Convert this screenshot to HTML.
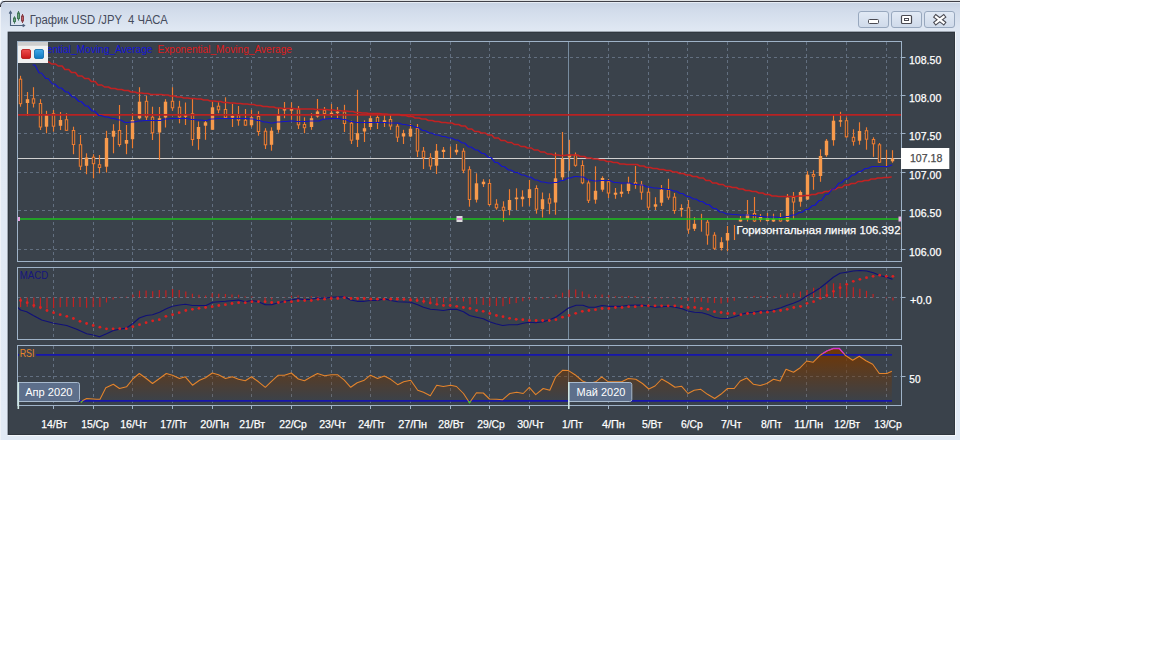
<!DOCTYPE html>
<html lang="ru"><head><meta charset="utf-8"><title>График USD/JPY 4 ЧАСА</title>
<style>html,body{margin:0;padding:0;background:#fff}body{width:1152px;height:648px;overflow:hidden;font-family:"Liberation Sans", sans-serif}svg{display:block}text{font-family:"Liberation Sans", sans-serif}</style></head><body>
<svg width="1152" height="648" viewBox="0 0 1152 648">
<defs>
<linearGradient id="wg" x1="0" y1="0" x2="0" y2="1"><stop offset="0" stop-color="#c4d0e1"/><stop offset="0.025" stop-color="#d2dceb"/><stop offset="0.07" stop-color="#e0e8f3"/><stop offset="1" stop-color="#e2eaf5"/></linearGradient>
<linearGradient id="rsig" gradientUnits="userSpaceOnUse" x1="0" y1="346" x2="0" y2="402"><stop offset="0" stop-color="#743600" stop-opacity="1"/><stop offset="1" stop-color="#743600" stop-opacity="0"/></linearGradient>
<linearGradient id="btn" x1="0" y1="0" x2="0" y2="1"><stop offset="0" stop-color="#e2eaf5"/><stop offset="1" stop-color="#cfdaea"/></linearGradient>
<linearGradient id="redsq" x1="0" y1="0" x2="0" y2="1"><stop offset="0" stop-color="#f05050"/><stop offset="1" stop-color="#c81818"/></linearGradient>
<linearGradient id="bluesq" x1="0" y1="0" x2="0" y2="1"><stop offset="0" stop-color="#40a8e8"/><stop offset="1" stop-color="#1078c0"/></linearGradient>
<clipPath id="cm"><rect x="18" y="42" width="883" height="219"/></clipPath>
<clipPath id="chi"><rect x="0" y="340" width="960" height="13.8"/></clipPath>
<clipPath id="clo"><rect x="0" y="401.2" width="960" height="10"/></clipPath>
</defs>
<rect x="0" y="0" width="1152" height="648" fill="#ffffff"/>
<path d="M0,440 L0,5 Q0,0 5,0 L960,0 L960,440 Z" fill="url(#wg)"/>
<rect x="3" y="0" width="957" height="0.8" fill="#ffffff"/><path d="M0.4,7 Q0.4,1.4 5,1.4 L960,1.4" fill="none" stroke="#303036" stroke-width="1"/><line x1="5" y1="2.5" x2="960" y2="2.5" stroke="#eef3f9" stroke-width="0.8"/>
<line x1="0.5" y1="7" x2="0.5" y2="440" stroke="#eef2f8" stroke-width="1"/>
<g fill="none" stroke="#4e627e" stroke-width="1.1"><path d="M10.5,12 V25.5 H24"/><path d="M9.2,13.6 L10.5,11.4 L11.8,13.6"/><path d="M22.7,24.2 L24.6,25.5 L22.7,26.8"/></g>
<g stroke="#44785a" stroke-width="1" fill="#6aa47a"><line x1="14.5" y1="16.3" x2="14.5" y2="23.7"/><rect x="13.5" y="18" width="2" height="3.6"/><line x1="18.5" y1="11" x2="18.5" y2="20.6"/><rect x="17.5" y="13" width="2" height="5.6"/></g>
<g stroke="#8a4048" stroke-width="1" fill="#c06068"><line x1="22.5" y1="14" x2="22.5" y2="23"/><rect x="21.5" y="16" width="2" height="5"/></g>
<text x="29.7" y="24" font-size="12" fill="#454b5c" textLength="138" lengthAdjust="spacingAndGlyphs" xml:space="preserve">График USD /JPY  4 ЧАСА</text>
<rect x="858.5" y="11.5" width="30" height="16" rx="2.5" fill="url(#btn)" stroke="#98a8be" stroke-width="1"/>
<rect x="891.5" y="11.5" width="30" height="16" rx="2.5" fill="url(#btn)" stroke="#98a8be" stroke-width="1"/>
<rect x="924.5" y="11.5" width="30" height="16" rx="2.5" fill="url(#btn)" stroke="#98a8be" stroke-width="1"/>
<rect x="868.5" y="19.5" width="10" height="4" rx="1" fill="#fff" stroke="#4a4a52" stroke-width="1"/>
<rect x="901.5" y="15.5" width="10" height="8" rx="1" fill="#fff" stroke="#4a4a52" stroke-width="1.2"/><rect x="904.5" y="18.5" width="4" height="2" fill="#fff" stroke="#4a4a52" stroke-width="1"/>
<path d="M936,16.8 L943.5,22.6 M943.5,16.8 L936,22.6" stroke="#4a4a52" stroke-width="4.4" stroke-linecap="square"/><path d="M936,16.8 L943.5,22.6 M943.5,16.8 L936,22.6" stroke="#fff" stroke-width="2.3" stroke-linecap="square"/>
<rect x="7.6" y="31.6" width="947.4" height="403.4" fill="#3a424b"/>
<rect x="8.5" y="32.5" width="946" height="402" fill="none" stroke="#30373f" stroke-width="1"/>
<path d="M955.5,32 V435.5 H8" fill="none" stroke="#f4f7fb" stroke-width="1"/>
<line x1="53.5" y1="42.0" x2="53.5" y2="261.0" stroke="#626f80" stroke-width="1" stroke-dasharray="3 3"/>
<line x1="93.5" y1="42.0" x2="93.5" y2="261.0" stroke="#626f80" stroke-width="1" stroke-dasharray="3 3"/>
<line x1="132.5" y1="42.0" x2="132.5" y2="261.0" stroke="#626f80" stroke-width="1" stroke-dasharray="3 3"/>
<line x1="172.5" y1="42.0" x2="172.5" y2="261.0" stroke="#626f80" stroke-width="1" stroke-dasharray="3 3"/>
<line x1="212.5" y1="42.0" x2="212.5" y2="261.0" stroke="#626f80" stroke-width="1" stroke-dasharray="3 3"/>
<line x1="251.5" y1="42.0" x2="251.5" y2="261.0" stroke="#626f80" stroke-width="1" stroke-dasharray="3 3"/>
<line x1="291.5" y1="42.0" x2="291.5" y2="261.0" stroke="#626f80" stroke-width="1" stroke-dasharray="3 3"/>
<line x1="331.5" y1="42.0" x2="331.5" y2="261.0" stroke="#626f80" stroke-width="1" stroke-dasharray="3 3"/>
<line x1="370.5" y1="42.0" x2="370.5" y2="261.0" stroke="#626f80" stroke-width="1" stroke-dasharray="3 3"/>
<line x1="410.5" y1="42.0" x2="410.5" y2="261.0" stroke="#626f80" stroke-width="1" stroke-dasharray="3 3"/>
<line x1="450.5" y1="42.0" x2="450.5" y2="261.0" stroke="#626f80" stroke-width="1" stroke-dasharray="3 3"/>
<line x1="489.5" y1="42.0" x2="489.5" y2="261.0" stroke="#626f80" stroke-width="1" stroke-dasharray="3 3"/>
<line x1="529.5" y1="42.0" x2="529.5" y2="261.0" stroke="#626f80" stroke-width="1" stroke-dasharray="3 3"/>
<line x1="568.5" y1="42.0" x2="568.5" y2="261.0" stroke="#788c9f" stroke-width="1"/>
<line x1="608.5" y1="42.0" x2="608.5" y2="261.0" stroke="#626f80" stroke-width="1" stroke-dasharray="3 3"/>
<line x1="648.5" y1="42.0" x2="648.5" y2="261.0" stroke="#626f80" stroke-width="1" stroke-dasharray="3 3"/>
<line x1="687.5" y1="42.0" x2="687.5" y2="261.0" stroke="#626f80" stroke-width="1" stroke-dasharray="3 3"/>
<line x1="727.5" y1="42.0" x2="727.5" y2="261.0" stroke="#626f80" stroke-width="1" stroke-dasharray="3 3"/>
<line x1="767.5" y1="42.0" x2="767.5" y2="261.0" stroke="#626f80" stroke-width="1" stroke-dasharray="3 3"/>
<line x1="806.5" y1="42.0" x2="806.5" y2="261.0" stroke="#626f80" stroke-width="1" stroke-dasharray="3 3"/>
<line x1="846.5" y1="42.0" x2="846.5" y2="261.0" stroke="#626f80" stroke-width="1" stroke-dasharray="3 3"/>
<line x1="886.5" y1="42.0" x2="886.5" y2="261.0" stroke="#626f80" stroke-width="1" stroke-dasharray="3 3"/>
<line x1="18" y1="57.5" x2="901" y2="57.5" stroke="#626f80" stroke-width="1" stroke-dasharray="3 3"/>
<line x1="18" y1="95.5" x2="901" y2="95.5" stroke="#626f80" stroke-width="1" stroke-dasharray="3 3"/>
<line x1="18" y1="133.5" x2="901" y2="133.5" stroke="#626f80" stroke-width="1" stroke-dasharray="3 3"/>
<line x1="18" y1="172.5" x2="901" y2="172.5" stroke="#626f80" stroke-width="1" stroke-dasharray="3 3"/>
<line x1="18" y1="210.5" x2="901" y2="210.5" stroke="#626f80" stroke-width="1" stroke-dasharray="3 3"/>
<line x1="18" y1="249.5" x2="901" y2="249.5" stroke="#626f80" stroke-width="1" stroke-dasharray="3 3"/>
<line x1="53.5" y1="268.0" x2="53.5" y2="339.0" stroke="#626f80" stroke-width="1" stroke-dasharray="3 3"/>
<line x1="93.5" y1="268.0" x2="93.5" y2="339.0" stroke="#626f80" stroke-width="1" stroke-dasharray="3 3"/>
<line x1="132.5" y1="268.0" x2="132.5" y2="339.0" stroke="#626f80" stroke-width="1" stroke-dasharray="3 3"/>
<line x1="172.5" y1="268.0" x2="172.5" y2="339.0" stroke="#626f80" stroke-width="1" stroke-dasharray="3 3"/>
<line x1="212.5" y1="268.0" x2="212.5" y2="339.0" stroke="#626f80" stroke-width="1" stroke-dasharray="3 3"/>
<line x1="251.5" y1="268.0" x2="251.5" y2="339.0" stroke="#626f80" stroke-width="1" stroke-dasharray="3 3"/>
<line x1="291.5" y1="268.0" x2="291.5" y2="339.0" stroke="#626f80" stroke-width="1" stroke-dasharray="3 3"/>
<line x1="331.5" y1="268.0" x2="331.5" y2="339.0" stroke="#626f80" stroke-width="1" stroke-dasharray="3 3"/>
<line x1="370.5" y1="268.0" x2="370.5" y2="339.0" stroke="#626f80" stroke-width="1" stroke-dasharray="3 3"/>
<line x1="410.5" y1="268.0" x2="410.5" y2="339.0" stroke="#626f80" stroke-width="1" stroke-dasharray="3 3"/>
<line x1="450.5" y1="268.0" x2="450.5" y2="339.0" stroke="#626f80" stroke-width="1" stroke-dasharray="3 3"/>
<line x1="489.5" y1="268.0" x2="489.5" y2="339.0" stroke="#626f80" stroke-width="1" stroke-dasharray="3 3"/>
<line x1="529.5" y1="268.0" x2="529.5" y2="339.0" stroke="#626f80" stroke-width="1" stroke-dasharray="3 3"/>
<line x1="568.5" y1="268.0" x2="568.5" y2="339.0" stroke="#788c9f" stroke-width="1"/>
<line x1="608.5" y1="268.0" x2="608.5" y2="339.0" stroke="#626f80" stroke-width="1" stroke-dasharray="3 3"/>
<line x1="648.5" y1="268.0" x2="648.5" y2="339.0" stroke="#626f80" stroke-width="1" stroke-dasharray="3 3"/>
<line x1="687.5" y1="268.0" x2="687.5" y2="339.0" stroke="#626f80" stroke-width="1" stroke-dasharray="3 3"/>
<line x1="727.5" y1="268.0" x2="727.5" y2="339.0" stroke="#626f80" stroke-width="1" stroke-dasharray="3 3"/>
<line x1="767.5" y1="268.0" x2="767.5" y2="339.0" stroke="#626f80" stroke-width="1" stroke-dasharray="3 3"/>
<line x1="806.5" y1="268.0" x2="806.5" y2="339.0" stroke="#626f80" stroke-width="1" stroke-dasharray="3 3"/>
<line x1="846.5" y1="268.0" x2="846.5" y2="339.0" stroke="#626f80" stroke-width="1" stroke-dasharray="3 3"/>
<line x1="886.5" y1="268.0" x2="886.5" y2="339.0" stroke="#626f80" stroke-width="1" stroke-dasharray="3 3"/>
<line x1="18" y1="297.5" x2="901" y2="297.5" stroke="#626f80" stroke-width="1" stroke-dasharray="3 3"/>
<line x1="53.5" y1="346.0" x2="53.5" y2="405.0" stroke="#626f80" stroke-width="1" stroke-dasharray="3 3"/>
<line x1="93.5" y1="346.0" x2="93.5" y2="405.0" stroke="#626f80" stroke-width="1" stroke-dasharray="3 3"/>
<line x1="132.5" y1="346.0" x2="132.5" y2="405.0" stroke="#626f80" stroke-width="1" stroke-dasharray="3 3"/>
<line x1="172.5" y1="346.0" x2="172.5" y2="405.0" stroke="#626f80" stroke-width="1" stroke-dasharray="3 3"/>
<line x1="212.5" y1="346.0" x2="212.5" y2="405.0" stroke="#626f80" stroke-width="1" stroke-dasharray="3 3"/>
<line x1="251.5" y1="346.0" x2="251.5" y2="405.0" stroke="#626f80" stroke-width="1" stroke-dasharray="3 3"/>
<line x1="291.5" y1="346.0" x2="291.5" y2="405.0" stroke="#626f80" stroke-width="1" stroke-dasharray="3 3"/>
<line x1="331.5" y1="346.0" x2="331.5" y2="405.0" stroke="#626f80" stroke-width="1" stroke-dasharray="3 3"/>
<line x1="370.5" y1="346.0" x2="370.5" y2="405.0" stroke="#626f80" stroke-width="1" stroke-dasharray="3 3"/>
<line x1="410.5" y1="346.0" x2="410.5" y2="405.0" stroke="#626f80" stroke-width="1" stroke-dasharray="3 3"/>
<line x1="450.5" y1="346.0" x2="450.5" y2="405.0" stroke="#626f80" stroke-width="1" stroke-dasharray="3 3"/>
<line x1="489.5" y1="346.0" x2="489.5" y2="405.0" stroke="#626f80" stroke-width="1" stroke-dasharray="3 3"/>
<line x1="529.5" y1="346.0" x2="529.5" y2="405.0" stroke="#626f80" stroke-width="1" stroke-dasharray="3 3"/>
<line x1="568.5" y1="346.0" x2="568.5" y2="405.0" stroke="#788c9f" stroke-width="1"/>
<line x1="608.5" y1="346.0" x2="608.5" y2="405.0" stroke="#626f80" stroke-width="1" stroke-dasharray="3 3"/>
<line x1="648.5" y1="346.0" x2="648.5" y2="405.0" stroke="#626f80" stroke-width="1" stroke-dasharray="3 3"/>
<line x1="687.5" y1="346.0" x2="687.5" y2="405.0" stroke="#626f80" stroke-width="1" stroke-dasharray="3 3"/>
<line x1="727.5" y1="346.0" x2="727.5" y2="405.0" stroke="#626f80" stroke-width="1" stroke-dasharray="3 3"/>
<line x1="767.5" y1="346.0" x2="767.5" y2="405.0" stroke="#626f80" stroke-width="1" stroke-dasharray="3 3"/>
<line x1="806.5" y1="346.0" x2="806.5" y2="405.0" stroke="#626f80" stroke-width="1" stroke-dasharray="3 3"/>
<line x1="846.5" y1="346.0" x2="846.5" y2="405.0" stroke="#626f80" stroke-width="1" stroke-dasharray="3 3"/>
<line x1="886.5" y1="346.0" x2="886.5" y2="405.0" stroke="#626f80" stroke-width="1" stroke-dasharray="3 3"/>
<line x1="18" y1="376.5" x2="901" y2="376.5" stroke="#626f80" stroke-width="1" stroke-dasharray="3 3"/>
<g clip-path="url(#cm)">
<line x1="18" y1="158.5" x2="901" y2="158.5" stroke="#d0d0d0" stroke-width="1.1"/>
<line x1="20.5" y1="75.8" x2="20.5" y2="106.7" stroke="#ee7c30" stroke-width="1.15"/>
<rect x="19.3" y="79.2" width="2.4" height="24.5" fill="#3f3e40" stroke="#ee7c30" stroke-width="1"/>
<line x1="27.5" y1="92.0" x2="27.5" y2="115.8" stroke="#ee7c30" stroke-width="1.15"/>
<rect x="25.8" y="99.2" width="3.4" height="3.8" fill="#f79a4c"/>
<line x1="33.5" y1="87.2" x2="33.5" y2="107.5" stroke="#ee7c30" stroke-width="1.15"/>
<rect x="32.3" y="98.8" width="2.4" height="4.4" fill="#3f3e40" stroke="#ee7c30" stroke-width="1"/>
<line x1="40.5" y1="99.2" x2="40.5" y2="130.0" stroke="#ee7c30" stroke-width="1.15"/>
<rect x="39.3" y="103.5" width="2.4" height="23.5" fill="#3f3e40" stroke="#ee7c30" stroke-width="1"/>
<line x1="46.5" y1="110.8" x2="46.5" y2="133.3" stroke="#ee7c30" stroke-width="1.15"/>
<rect x="44.8" y="115.0" width="3.4" height="11.7" fill="#f79a4c"/>
<line x1="53.5" y1="110.0" x2="53.5" y2="131.7" stroke="#ee7c30" stroke-width="1.15"/>
<rect x="52.3" y="113.8" width="2.4" height="12.4" fill="#3f3e40" stroke="#ee7c30" stroke-width="1"/>
<line x1="60.5" y1="112.0" x2="60.5" y2="130.0" stroke="#ee7c30" stroke-width="1.15"/>
<rect x="58.8" y="120.0" width="3.4" height="5.8" fill="#f79a4c"/>
<line x1="66.5" y1="113.3" x2="66.5" y2="130.8" stroke="#ee7c30" stroke-width="1.15"/>
<rect x="65.3" y="119.7" width="2.4" height="10.6" fill="#3f3e40" stroke="#ee7c30" stroke-width="1"/>
<line x1="73.5" y1="126.7" x2="73.5" y2="154.2" stroke="#ee7c30" stroke-width="1.15"/>
<rect x="72.3" y="130.5" width="2.4" height="14.0" fill="#3f3e40" stroke="#ee7c30" stroke-width="1"/>
<line x1="80.5" y1="135.0" x2="80.5" y2="170.0" stroke="#ee7c30" stroke-width="1.15"/>
<rect x="79.3" y="144.7" width="2.4" height="21.5" fill="#3f3e40" stroke="#ee7c30" stroke-width="1"/>
<line x1="86.5" y1="153.3" x2="86.5" y2="174.2" stroke="#ee7c30" stroke-width="1.15"/>
<rect x="84.8" y="157.5" width="3.4" height="8.3" fill="#f79a4c"/>
<line x1="93.5" y1="154.2" x2="93.5" y2="178.3" stroke="#ee7c30" stroke-width="1.15"/>
<rect x="92.3" y="157.2" width="2.4" height="6.5" fill="#3f3e40" stroke="#ee7c30" stroke-width="1"/>
<line x1="99.5" y1="155.0" x2="99.5" y2="173.3" stroke="#ee7c30" stroke-width="1.15"/>
<rect x="98.3" y="164.7" width="2.4" height="2.8" fill="#3f3e40" stroke="#ee7c30" stroke-width="1"/>
<line x1="106.5" y1="130.8" x2="106.5" y2="172.5" stroke="#ee7c30" stroke-width="1.15"/>
<rect x="104.8" y="138.0" width="3.4" height="28.7" fill="#f79a4c"/>
<line x1="113.5" y1="124.2" x2="113.5" y2="153.3" stroke="#ee7c30" stroke-width="1.15"/>
<rect x="111.8" y="130.8" width="3.4" height="5.9" fill="#f79a4c"/>
<line x1="119.5" y1="105.0" x2="119.5" y2="146.7" stroke="#ee7c30" stroke-width="1.15"/>
<rect x="118.3" y="130.5" width="2.4" height="14.0" fill="#3f3e40" stroke="#ee7c30" stroke-width="1"/>
<line x1="126.5" y1="125.0" x2="126.5" y2="154.2" stroke="#ee7c30" stroke-width="1.15"/>
<rect x="124.8" y="140.0" width="3.4" height="3.7" fill="#f79a4c"/>
<line x1="132.5" y1="113.3" x2="132.5" y2="148.3" stroke="#ee7c30" stroke-width="1.15"/>
<rect x="130.8" y="120.0" width="3.4" height="19.2" fill="#f79a4c"/>
<line x1="139.5" y1="87.2" x2="139.5" y2="119.2" stroke="#ee7c30" stroke-width="1.15"/>
<rect x="137.8" y="101.7" width="3.4" height="16.6" fill="#f79a4c"/>
<line x1="146.5" y1="95.8" x2="146.5" y2="120.0" stroke="#ee7c30" stroke-width="1.15"/>
<rect x="145.3" y="101.3" width="2.4" height="15.7" fill="#3f3e40" stroke="#ee7c30" stroke-width="1"/>
<line x1="152.5" y1="106.7" x2="152.5" y2="140.0" stroke="#ee7c30" stroke-width="1.15"/>
<rect x="151.3" y="117.2" width="2.4" height="15.6" fill="#3f3e40" stroke="#ee7c30" stroke-width="1"/>
<line x1="159.5" y1="107.0" x2="159.5" y2="160.0" stroke="#ee7c30" stroke-width="1.15"/>
<rect x="157.8" y="118.3" width="3.4" height="14.2" fill="#f79a4c"/>
<line x1="165.5" y1="99.2" x2="165.5" y2="127.5" stroke="#ee7c30" stroke-width="1.15"/>
<rect x="163.8" y="101.7" width="3.4" height="15.8" fill="#f79a4c"/>
<line x1="172.5" y1="87.2" x2="172.5" y2="110.8" stroke="#ee7c30" stroke-width="1.15"/>
<rect x="171.3" y="101.3" width="2.4" height="6.5" fill="#3f3e40" stroke="#ee7c30" stroke-width="1"/>
<line x1="179.5" y1="100.8" x2="179.5" y2="123.3" stroke="#ee7c30" stroke-width="1.15"/>
<rect x="178.3" y="107.2" width="2.4" height="9.8" fill="#3f3e40" stroke="#ee7c30" stroke-width="1"/>
<line x1="185.5" y1="102.5" x2="185.5" y2="125.0" stroke="#ee7c30" stroke-width="1.15"/>
<rect x="183.8" y="115.0" width="3.4" height="1.7" fill="#f79a4c"/>
<line x1="192.5" y1="98.3" x2="192.5" y2="145.8" stroke="#ee7c30" stroke-width="1.15"/>
<rect x="191.3" y="113.8" width="2.4" height="25.7" fill="#3f3e40" stroke="#ee7c30" stroke-width="1"/>
<line x1="198.5" y1="121.5" x2="198.5" y2="149.8" stroke="#ee7c30" stroke-width="1.15"/>
<rect x="196.8" y="127.0" width="3.4" height="12.0" fill="#f79a4c"/>
<line x1="205.5" y1="120.7" x2="205.5" y2="139.8" stroke="#ee7c30" stroke-width="1.15"/>
<rect x="203.8" y="122.3" width="3.4" height="3.4" fill="#f79a4c"/>
<line x1="212.5" y1="101.5" x2="212.5" y2="129.8" stroke="#ee7c30" stroke-width="1.15"/>
<rect x="210.8" y="107.3" width="3.4" height="22.5" fill="#f79a4c"/>
<line x1="218.5" y1="102.3" x2="218.5" y2="113.2" stroke="#ee7c30" stroke-width="1.15"/>
<rect x="217.3" y="106.2" width="2.4" height="3.6" fill="#3f3e40" stroke="#ee7c30" stroke-width="1"/>
<line x1="225.5" y1="97.3" x2="225.5" y2="119.0" stroke="#ee7c30" stroke-width="1.15"/>
<rect x="224.3" y="109.5" width="2.4" height="8.2" fill="#3f3e40" stroke="#ee7c30" stroke-width="1"/>
<line x1="232.5" y1="104.0" x2="232.5" y2="127.0" stroke="#ee7c30" stroke-width="1.15"/>
<rect x="230.8" y="115.7" width="3.4" height="2.0" fill="#f79a4c"/>
<line x1="238.5" y1="106.0" x2="238.5" y2="125.7" stroke="#ee7c30" stroke-width="1.15"/>
<rect x="237.3" y="115.3" width="2.4" height="4.9" fill="#3f3e40" stroke="#ee7c30" stroke-width="1"/>
<line x1="245.5" y1="109.0" x2="245.5" y2="125.7" stroke="#ee7c30" stroke-width="1.15"/>
<rect x="244.3" y="120.3" width="2.4" height="4.9" fill="#3f3e40" stroke="#ee7c30" stroke-width="1"/>
<line x1="251.5" y1="109.8" x2="251.5" y2="127.3" stroke="#ee7c30" stroke-width="1.15"/>
<rect x="249.8" y="117.3" width="3.4" height="8.0" fill="#f79a4c"/>
<line x1="258.5" y1="111.2" x2="258.5" y2="135.7" stroke="#ee7c30" stroke-width="1.15"/>
<rect x="257.3" y="116.5" width="2.4" height="15.0" fill="#3f3e40" stroke="#ee7c30" stroke-width="1"/>
<line x1="265.5" y1="128.2" x2="265.5" y2="149.0" stroke="#ee7c30" stroke-width="1.15"/>
<rect x="264.3" y="131.2" width="2.4" height="13.6" fill="#3f3e40" stroke="#ee7c30" stroke-width="1"/>
<line x1="271.5" y1="127.3" x2="271.5" y2="150.7" stroke="#ee7c30" stroke-width="1.15"/>
<rect x="269.8" y="130.7" width="3.4" height="14.1" fill="#f79a4c"/>
<line x1="278.5" y1="108.2" x2="278.5" y2="132.7" stroke="#ee7c30" stroke-width="1.15"/>
<rect x="276.8" y="114.0" width="3.4" height="15.8" fill="#f79a4c"/>
<line x1="284.5" y1="102.0" x2="284.5" y2="118.2" stroke="#ee7c30" stroke-width="1.15"/>
<rect x="282.8" y="109.0" width="3.4" height="1.5" fill="#f79a4c"/>
<line x1="291.5" y1="102.3" x2="291.5" y2="119.8" stroke="#ee7c30" stroke-width="1.15"/>
<rect x="289.8" y="109.0" width="3.4" height="1.7" fill="#f79a4c"/>
<line x1="298.5" y1="106.0" x2="298.5" y2="129.0" stroke="#ee7c30" stroke-width="1.15"/>
<rect x="297.3" y="109.2" width="2.4" height="15.6" fill="#3f3e40" stroke="#ee7c30" stroke-width="1"/>
<line x1="304.5" y1="117.3" x2="304.5" y2="133.2" stroke="#ee7c30" stroke-width="1.15"/>
<rect x="303.3" y="124.5" width="2.4" height="3.2" fill="#3f3e40" stroke="#ee7c30" stroke-width="1"/>
<line x1="311.5" y1="113.2" x2="311.5" y2="129.8" stroke="#ee7c30" stroke-width="1.15"/>
<rect x="309.8" y="118.2" width="3.4" height="8.8" fill="#f79a4c"/>
<line x1="317.5" y1="99.0" x2="317.5" y2="117.7" stroke="#ee7c30" stroke-width="1.15"/>
<rect x="315.8" y="111.5" width="3.4" height="5.0" fill="#f79a4c"/>
<line x1="324.5" y1="107.0" x2="324.5" y2="119.0" stroke="#ee7c30" stroke-width="1.15"/>
<rect x="323.3" y="110.3" width="2.4" height="3.2" fill="#3f3e40" stroke="#ee7c30" stroke-width="1"/>
<line x1="331.5" y1="104.0" x2="331.5" y2="117.3" stroke="#ee7c30" stroke-width="1.15"/>
<rect x="329.8" y="112.7" width="3.4" height="1.5" fill="#f79a4c"/>
<line x1="337.5" y1="107.0" x2="337.5" y2="118.2" stroke="#ee7c30" stroke-width="1.15"/>
<rect x="335.8" y="111.5" width="3.4" height="1.7" fill="#f79a4c"/>
<line x1="344.5" y1="104.8" x2="344.5" y2="132.0" stroke="#ee7c30" stroke-width="1.15"/>
<rect x="343.3" y="112.0" width="2.4" height="11.5" fill="#3f3e40" stroke="#ee7c30" stroke-width="1"/>
<line x1="351.5" y1="120.7" x2="351.5" y2="144.0" stroke="#ee7c30" stroke-width="1.15"/>
<rect x="350.3" y="123.2" width="2.4" height="17.0" fill="#3f3e40" stroke="#ee7c30" stroke-width="1"/>
<line x1="357.5" y1="89.8" x2="357.5" y2="147.0" stroke="#ee7c30" stroke-width="1.15"/>
<rect x="355.8" y="133.2" width="3.4" height="6.6" fill="#f79a4c"/>
<line x1="364.5" y1="120.3" x2="364.5" y2="142.0" stroke="#ee7c30" stroke-width="1.15"/>
<rect x="362.8" y="128.2" width="3.4" height="3.3" fill="#f79a4c"/>
<line x1="370.5" y1="114.8" x2="370.5" y2="129.8" stroke="#ee7c30" stroke-width="1.15"/>
<rect x="368.8" y="118.2" width="3.4" height="8.8" fill="#f79a4c"/>
<line x1="377.5" y1="114.8" x2="377.5" y2="129.0" stroke="#ee7c30" stroke-width="1.15"/>
<rect x="376.3" y="117.5" width="2.4" height="5.2" fill="#3f3e40" stroke="#ee7c30" stroke-width="1"/>
<line x1="384.5" y1="114.8" x2="384.5" y2="127.0" stroke="#ee7c30" stroke-width="1.15"/>
<rect x="382.8" y="120.3" width="3.4" height="1.7" fill="#f79a4c"/>
<line x1="390.5" y1="114.8" x2="390.5" y2="129.8" stroke="#ee7c30" stroke-width="1.15"/>
<rect x="389.3" y="119.5" width="2.4" height="6.5" fill="#3f3e40" stroke="#ee7c30" stroke-width="1"/>
<line x1="397.5" y1="124.0" x2="397.5" y2="142.0" stroke="#ee7c30" stroke-width="1.15"/>
<rect x="396.3" y="126.2" width="2.4" height="11.0" fill="#3f3e40" stroke="#ee7c30" stroke-width="1"/>
<line x1="403.5" y1="129.8" x2="403.5" y2="144.0" stroke="#ee7c30" stroke-width="1.15"/>
<rect x="401.8" y="133.2" width="3.4" height="3.3" fill="#f79a4c"/>
<line x1="410.5" y1="124.0" x2="410.5" y2="137.3" stroke="#ee7c30" stroke-width="1.15"/>
<rect x="408.8" y="128.7" width="3.4" height="7.8" fill="#f79a4c"/>
<line x1="417.5" y1="124.0" x2="417.5" y2="157.0" stroke="#ee7c30" stroke-width="1.15"/>
<rect x="416.3" y="128.2" width="2.4" height="22.8" fill="#3f3e40" stroke="#ee7c30" stroke-width="1"/>
<line x1="423.5" y1="147.0" x2="423.5" y2="169.0" stroke="#ee7c30" stroke-width="1.15"/>
<rect x="422.3" y="151.2" width="2.4" height="6.5" fill="#3f3e40" stroke="#ee7c30" stroke-width="1"/>
<line x1="430.5" y1="153.2" x2="430.5" y2="169.8" stroke="#ee7c30" stroke-width="1.15"/>
<rect x="429.3" y="157.8" width="2.4" height="8.2" fill="#3f3e40" stroke="#ee7c30" stroke-width="1"/>
<line x1="436.5" y1="144.0" x2="436.5" y2="174.0" stroke="#ee7c30" stroke-width="1.15"/>
<rect x="434.8" y="150.7" width="3.4" height="15.0" fill="#f79a4c"/>
<line x1="443.5" y1="147.0" x2="443.5" y2="158.2" stroke="#ee7c30" stroke-width="1.15"/>
<rect x="441.8" y="149.8" width="3.4" height="2.2" fill="#f79a4c"/>
<line x1="450.5" y1="146.5" x2="450.5" y2="158.2" stroke="#ee7c30" stroke-width="1.15"/>
<line x1="456.5" y1="144.0" x2="456.5" y2="154.8" stroke="#ee7c30" stroke-width="1.15"/>
<rect x="454.8" y="149.8" width="3.4" height="2.5" fill="#f79a4c"/>
<line x1="463.5" y1="148.2" x2="463.5" y2="173.2" stroke="#ee7c30" stroke-width="1.15"/>
<rect x="462.3" y="151.2" width="2.4" height="19.0" fill="#3f3e40" stroke="#ee7c30" stroke-width="1"/>
<line x1="469.5" y1="166.3" x2="469.5" y2="206.7" stroke="#ee7c30" stroke-width="1.15"/>
<rect x="468.3" y="169.7" width="2.4" height="29.8" fill="#3f3e40" stroke="#ee7c30" stroke-width="1"/>
<line x1="476.5" y1="173.3" x2="476.5" y2="202.5" stroke="#ee7c30" stroke-width="1.15"/>
<rect x="474.8" y="183.3" width="3.4" height="16.4" fill="#f79a4c"/>
<line x1="483.5" y1="179.2" x2="483.5" y2="187.0" stroke="#ee7c30" stroke-width="1.15"/>
<rect x="481.8" y="181.7" width="3.4" height="2.5" fill="#f79a4c"/>
<line x1="489.5" y1="179.2" x2="489.5" y2="205.8" stroke="#ee7c30" stroke-width="1.15"/>
<rect x="488.3" y="183.5" width="2.4" height="21.0" fill="#3f3e40" stroke="#ee7c30" stroke-width="1"/>
<line x1="496.5" y1="199.2" x2="496.5" y2="209.7" stroke="#ee7c30" stroke-width="1.15"/>
<rect x="495.3" y="204.2" width="2.4" height="3.6" fill="#3f3e40" stroke="#ee7c30" stroke-width="1"/>
<line x1="503.5" y1="201.3" x2="503.5" y2="221.7" stroke="#ee7c30" stroke-width="1.15"/>
<rect x="502.3" y="207.2" width="2.4" height="3.1" fill="#3f3e40" stroke="#ee7c30" stroke-width="1"/>
<line x1="509.5" y1="189.2" x2="509.5" y2="215.3" stroke="#ee7c30" stroke-width="1.15"/>
<rect x="507.8" y="200.0" width="3.4" height="10.0" fill="#f79a4c"/>
<line x1="516.5" y1="188.3" x2="516.5" y2="210.0" stroke="#ee7c30" stroke-width="1.15"/>
<rect x="514.8" y="197.5" width="3.4" height="1.7" fill="#f79a4c"/>
<line x1="522.5" y1="190.3" x2="522.5" y2="206.7" stroke="#ee7c30" stroke-width="1.15"/>
<rect x="520.8" y="196.7" width="3.4" height="2.5" fill="#f79a4c"/>
<line x1="529.5" y1="180.0" x2="529.5" y2="205.8" stroke="#ee7c30" stroke-width="1.15"/>
<rect x="527.8" y="189.2" width="3.4" height="8.8" fill="#f79a4c"/>
<line x1="536.5" y1="185.3" x2="536.5" y2="213.7" stroke="#ee7c30" stroke-width="1.15"/>
<rect x="535.3" y="188.5" width="2.4" height="20.7" fill="#3f3e40" stroke="#ee7c30" stroke-width="1"/>
<line x1="542.5" y1="192.5" x2="542.5" y2="217.5" stroke="#ee7c30" stroke-width="1.15"/>
<rect x="540.8" y="199.2" width="3.4" height="10.0" fill="#f79a4c"/>
<line x1="549.5" y1="193.3" x2="549.5" y2="214.2" stroke="#ee7c30" stroke-width="1.15"/>
<rect x="548.3" y="198.8" width="2.4" height="4.4" fill="#3f3e40" stroke="#ee7c30" stroke-width="1"/>
<line x1="555.5" y1="152.5" x2="555.5" y2="214.7" stroke="#ee7c30" stroke-width="1.15"/>
<rect x="553.8" y="178.3" width="3.4" height="24.2" fill="#f79a4c"/>
<line x1="562.5" y1="132.0" x2="562.5" y2="179.8" stroke="#ee7c30" stroke-width="1.15"/>
<rect x="560.8" y="159.0" width="3.4" height="18.3" fill="#f79a4c"/>
<line x1="569.5" y1="139.8" x2="569.5" y2="170.7" stroke="#ee7c30" stroke-width="1.15"/>
<rect x="567.8" y="154.8" width="3.4" height="2.5" fill="#f79a4c"/>
<line x1="575.5" y1="152.5" x2="575.5" y2="166.7" stroke="#ee7c30" stroke-width="1.15"/>
<rect x="574.3" y="155.2" width="2.4" height="10.1" fill="#3f3e40" stroke="#ee7c30" stroke-width="1"/>
<line x1="582.5" y1="160.3" x2="582.5" y2="184.2" stroke="#ee7c30" stroke-width="1.15"/>
<rect x="581.3" y="165.5" width="2.4" height="17.3" fill="#3f3e40" stroke="#ee7c30" stroke-width="1"/>
<line x1="588.5" y1="179.7" x2="588.5" y2="203.0" stroke="#ee7c30" stroke-width="1.15"/>
<rect x="587.3" y="183.0" width="2.4" height="17.3" fill="#3f3e40" stroke="#ee7c30" stroke-width="1"/>
<line x1="595.5" y1="166.3" x2="595.5" y2="203.7" stroke="#ee7c30" stroke-width="1.15"/>
<rect x="593.8" y="190.8" width="3.4" height="8.9" fill="#f79a4c"/>
<line x1="602.5" y1="176.3" x2="602.5" y2="191.7" stroke="#ee7c30" stroke-width="1.15"/>
<rect x="600.8" y="178.0" width="3.4" height="11.7" fill="#f79a4c"/>
<line x1="608.5" y1="179.0" x2="608.5" y2="198.0" stroke="#ee7c30" stroke-width="1.15"/>
<rect x="607.3" y="181.8" width="2.4" height="11.2" fill="#3f3e40" stroke="#ee7c30" stroke-width="1"/>
<line x1="615.5" y1="188.0" x2="615.5" y2="198.8" stroke="#ee7c30" stroke-width="1.15"/>
<rect x="613.8" y="192.7" width="3.4" height="2.0" fill="#f79a4c"/>
<line x1="621.5" y1="184.3" x2="621.5" y2="197.2" stroke="#ee7c30" stroke-width="1.15"/>
<rect x="619.8" y="191.7" width="3.4" height="2.1" fill="#f79a4c"/>
<line x1="628.5" y1="176.7" x2="628.5" y2="193.8" stroke="#ee7c30" stroke-width="1.15"/>
<rect x="626.8" y="183.0" width="3.4" height="8.0" fill="#f79a4c"/>
<line x1="635.5" y1="166.0" x2="635.5" y2="188.8" stroke="#ee7c30" stroke-width="1.15"/>
<rect x="634.3" y="182.7" width="2.4" height="1.8" fill="#3f3e40" stroke="#ee7c30" stroke-width="1"/>
<line x1="641.5" y1="181.0" x2="641.5" y2="199.7" stroke="#ee7c30" stroke-width="1.15"/>
<rect x="640.3" y="184.8" width="2.4" height="7.4" fill="#3f3e40" stroke="#ee7c30" stroke-width="1"/>
<line x1="648.5" y1="188.0" x2="648.5" y2="210.0" stroke="#ee7c30" stroke-width="1.15"/>
<rect x="647.3" y="192.2" width="2.4" height="15.0" fill="#3f3e40" stroke="#ee7c30" stroke-width="1"/>
<line x1="655.5" y1="197.2" x2="655.5" y2="210.0" stroke="#ee7c30" stroke-width="1.15"/>
<rect x="653.8" y="204.3" width="3.4" height="2.4" fill="#f79a4c"/>
<line x1="661.5" y1="185.0" x2="661.5" y2="206.0" stroke="#ee7c30" stroke-width="1.15"/>
<rect x="659.8" y="189.7" width="3.4" height="13.0" fill="#f79a4c"/>
<line x1="668.5" y1="178.8" x2="668.5" y2="199.7" stroke="#ee7c30" stroke-width="1.15"/>
<rect x="667.3" y="189.8" width="2.4" height="7.4" fill="#3f3e40" stroke="#ee7c30" stroke-width="1"/>
<line x1="674.5" y1="193.0" x2="674.5" y2="213.8" stroke="#ee7c30" stroke-width="1.15"/>
<rect x="673.3" y="197.2" width="2.4" height="13.3" fill="#3f3e40" stroke="#ee7c30" stroke-width="1"/>
<line x1="681.5" y1="204.3" x2="681.5" y2="216.7" stroke="#ee7c30" stroke-width="1.15"/>
<rect x="679.8" y="208.0" width="3.4" height="1.7" fill="#f79a4c"/>
<line x1="688.5" y1="200.0" x2="688.5" y2="233.8" stroke="#ee7c30" stroke-width="1.15"/>
<rect x="687.3" y="207.7" width="2.4" height="21.5" fill="#3f3e40" stroke="#ee7c30" stroke-width="1"/>
<line x1="694.5" y1="217.2" x2="694.5" y2="231.0" stroke="#ee7c30" stroke-width="1.15"/>
<rect x="692.8" y="223.8" width="3.4" height="5.0" fill="#f79a4c"/>
<line x1="701.5" y1="213.8" x2="701.5" y2="231.7" stroke="#ee7c30" stroke-width="1.15"/>
<line x1="707.5" y1="220.0" x2="707.5" y2="244.7" stroke="#ee7c30" stroke-width="1.15"/>
<rect x="706.3" y="222.2" width="2.4" height="12.8" fill="#3f3e40" stroke="#ee7c30" stroke-width="1"/>
<line x1="714.5" y1="232.2" x2="714.5" y2="250.0" stroke="#ee7c30" stroke-width="1.15"/>
<rect x="713.3" y="235.2" width="2.4" height="13.1" fill="#3f3e40" stroke="#ee7c30" stroke-width="1"/>
<line x1="721.5" y1="237.2" x2="721.5" y2="250.5" stroke="#ee7c30" stroke-width="1.15"/>
<rect x="719.8" y="242.2" width="3.4" height="5.8" fill="#f79a4c"/>
<line x1="727.5" y1="226.0" x2="727.5" y2="251.3" stroke="#ee7c30" stroke-width="1.15"/>
<rect x="725.8" y="233.0" width="3.4" height="7.5" fill="#f79a4c"/>
<line x1="734.5" y1="225.0" x2="734.5" y2="240.0" stroke="#ee7c30" stroke-width="1.15"/>
<line x1="740.5" y1="216.0" x2="740.5" y2="221.7" stroke="#ee7c30" stroke-width="1.15"/>
<rect x="738.8" y="219.0" width="3.4" height="2.5" fill="#f79a4c"/>
<line x1="747.5" y1="200.0" x2="747.5" y2="221.5" stroke="#ee7c30" stroke-width="1.15"/>
<rect x="745.8" y="214.3" width="3.4" height="4.7" fill="#f79a4c"/>
<line x1="754.5" y1="197.0" x2="754.5" y2="222.0" stroke="#ee7c30" stroke-width="1.15"/>
<rect x="753.3" y="213.5" width="2.4" height="7.5" fill="#3f3e40" stroke="#ee7c30" stroke-width="1"/>
<line x1="760.5" y1="214.0" x2="760.5" y2="221.7" stroke="#ee7c30" stroke-width="1.15"/>
<rect x="758.8" y="217.0" width="3.4" height="3.0" fill="#f79a4c"/>
<line x1="767.5" y1="213.0" x2="767.5" y2="221.7" stroke="#ee7c30" stroke-width="1.15"/>
<rect x="765.8" y="218.0" width="3.4" height="3.0" fill="#f79a4c"/>
<line x1="773.5" y1="213.7" x2="773.5" y2="222.0" stroke="#ee7c30" stroke-width="1.15"/>
<rect x="771.8" y="219.0" width="3.4" height="2.5" fill="#f79a4c"/>
<line x1="780.5" y1="213.0" x2="780.5" y2="221.7" stroke="#ee7c30" stroke-width="1.15"/>
<rect x="779.3" y="218.0" width="2.4" height="3.0" fill="#3f3e40" stroke="#ee7c30" stroke-width="1"/>
<line x1="787.5" y1="194.0" x2="787.5" y2="222.0" stroke="#ee7c30" stroke-width="1.15"/>
<rect x="785.8" y="197.5" width="3.4" height="23.8" fill="#f79a4c"/>
<line x1="793.5" y1="192.0" x2="793.5" y2="219.2" stroke="#ee7c30" stroke-width="1.15"/>
<rect x="792.3" y="197.5" width="2.4" height="4.5" fill="#3f3e40" stroke="#ee7c30" stroke-width="1"/>
<line x1="800.5" y1="190.5" x2="800.5" y2="206.7" stroke="#ee7c30" stroke-width="1.15"/>
<rect x="798.8" y="192.0" width="3.4" height="9.7" fill="#f79a4c"/>
<line x1="807.5" y1="171.2" x2="807.5" y2="200.0" stroke="#ee7c30" stroke-width="1.15"/>
<rect x="805.8" y="174.7" width="3.4" height="24.8" fill="#f79a4c"/>
<line x1="813.5" y1="170.2" x2="813.5" y2="189.8" stroke="#ee7c30" stroke-width="1.15"/>
<rect x="812.3" y="174.5" width="2.4" height="1.8" fill="#3f3e40" stroke="#ee7c30" stroke-width="1"/>
<line x1="820.5" y1="149.3" x2="820.5" y2="181.8" stroke="#ee7c30" stroke-width="1.15"/>
<rect x="818.8" y="156.0" width="3.4" height="20.0" fill="#f79a4c"/>
<line x1="826.5" y1="139.0" x2="826.5" y2="156.8" stroke="#ee7c30" stroke-width="1.15"/>
<rect x="824.8" y="140.7" width="3.4" height="14.5" fill="#f79a4c"/>
<line x1="833.5" y1="115.2" x2="833.5" y2="145.7" stroke="#ee7c30" stroke-width="1.15"/>
<rect x="831.8" y="120.7" width="3.4" height="19.5" fill="#f79a4c"/>
<line x1="840.5" y1="111.8" x2="840.5" y2="126.8" stroke="#ee7c30" stroke-width="1.15"/>
<rect x="838.8" y="120.2" width="3.4" height="1.5" fill="#f79a4c"/>
<line x1="846.5" y1="117.3" x2="846.5" y2="137.7" stroke="#ee7c30" stroke-width="1.15"/>
<rect x="845.3" y="120.7" width="2.4" height="16.1" fill="#3f3e40" stroke="#ee7c30" stroke-width="1"/>
<line x1="853.5" y1="129.3" x2="853.5" y2="145.7" stroke="#ee7c30" stroke-width="1.15"/>
<rect x="852.3" y="137.3" width="2.4" height="4.0" fill="#3f3e40" stroke="#ee7c30" stroke-width="1"/>
<line x1="859.5" y1="122.3" x2="859.5" y2="144.7" stroke="#ee7c30" stroke-width="1.15"/>
<rect x="857.8" y="131.0" width="3.4" height="9.7" fill="#f79a4c"/>
<line x1="866.5" y1="127.3" x2="866.5" y2="149.7" stroke="#ee7c30" stroke-width="1.15"/>
<rect x="865.3" y="130.7" width="2.4" height="8.5" fill="#3f3e40" stroke="#ee7c30" stroke-width="1"/>
<line x1="873.5" y1="137.3" x2="873.5" y2="156.8" stroke="#ee7c30" stroke-width="1.15"/>
<rect x="872.3" y="139.5" width="2.4" height="4.3" fill="#3f3e40" stroke="#ee7c30" stroke-width="1"/>
<line x1="879.5" y1="143.0" x2="879.5" y2="163.0" stroke="#ee7c30" stroke-width="1.15"/>
<rect x="878.3" y="144.8" width="2.4" height="17.4" fill="#3f3e40" stroke="#ee7c30" stroke-width="1"/>
<line x1="886.5" y1="149.7" x2="886.5" y2="166.0" stroke="#ee7c30" stroke-width="1.15"/>
<line x1="892.5" y1="150.2" x2="892.5" y2="162.7" stroke="#ee7c30" stroke-width="1.15"/>
<rect x="890.8" y="158.5" width="3.4" height="2.8" fill="#f79a4c"/>
<line x1="18" y1="114.9" x2="901" y2="114.9" stroke="#b82222" stroke-width="1.6"/>
<path d="M18.6,48.5 L22.5,48.5 L25.2,52.5 L29.1,52.5 L31.8,56.0 L35.8,56.0 L38.4,59.0 L42.4,59.0 L45.0,62.0 L49.0,62.0 L51.6,64.0 L55.6,64.0 L58.2,66.0 L62.2,66.0 L64.8,69.5 L68.8,69.5 L71.4,72.5 L75.4,72.5 L78.0,76.0 L82.0,76.0 L84.7,78.5 L88.6,78.5 L91.3,81.5 L95.2,81.5 L97.9,85.0 L101.8,85.0 L104.5,87.0 L108.4,87.0 L111.1,88.5 L115.1,88.5 L117.7,89.5 L121.7,89.5 L124.3,90.5 L128.3,90.5 L130.9,92.0 L134.9,92.0 L137.5,93.0 L141.5,93.0 L144.1,93.5 L148.1,93.5 L150.7,94.5 L154.7,94.5 L157.4,94.5 L161.3,94.5 L164.0,95.0 L167.9,95.0 L170.6,96.0 L174.5,96.0 L177.2,97.0 L181.1,97.0 L183.8,98.0 L187.8,98.0 L190.4,98.5 L194.4,98.5 L197.0,99.0 L201.0,99.0 L203.6,100.0 L207.6,100.0 L210.2,101.0 L214.2,101.0 L216.8,101.5 L220.8,101.5 L223.4,102.5 L227.4,102.5 L230.1,103.0 L234.0,103.0 L236.7,103.5 L240.6,103.5 L243.3,104.0 L247.2,104.0 L249.9,104.5 L253.8,104.5 L256.5,105.5 L260.5,105.5 L263.1,106.5 L267.1,106.5 L269.7,107.0 L273.7,107.0 L276.3,108.0 L280.3,108.0 L282.9,108.5 L286.9,108.5 L289.5,108.5 L293.5,108.5 L296.1,109.0 L300.1,109.0 L302.8,109.0 L306.7,109.0 L309.4,109.0 L313.3,109.0 L316.0,109.5 L319.9,109.5 L322.6,109.5 L326.5,109.5 L329.2,110.0 L333.2,110.0 L335.8,110.5 L339.8,110.5 L342.4,111.0 L346.4,111.0 L349.0,111.5 L353.0,111.5 L355.6,112.5 L359.6,112.5 L362.2,113.0 L366.2,113.0 L368.8,113.5 L372.8,113.5 L375.5,113.5 L379.4,113.5 L382.1,114.0 L386.0,114.0 L388.7,114.5 L392.6,114.5 L395.3,114.5 L399.2,114.5 L401.9,115.5 L405.9,115.5 L408.5,116.5 L412.5,116.5 L415.1,118.0 L419.1,118.0 L421.7,119.0 L425.7,119.0 L428.3,120.5 L432.3,120.5 L434.9,121.5 L438.9,121.5 L441.5,122.5 L445.5,122.5 L448.2,123.0 L452.1,123.0 L454.8,124.5 L458.7,124.5 L461.4,126.0 L465.3,126.0 L468.0,129.0 L471.9,129.0 L474.6,131.5 L478.6,131.5 L481.2,133.0 L485.2,133.0 L487.8,135.0 L491.8,135.0 L494.4,138.0 L498.4,138.0 L501.0,140.5 L505.0,140.5 L507.6,142.5 L511.6,142.5 L514.2,144.5 L518.2,144.5 L520.9,146.5 L524.8,146.5 L527.5,148.0 L531.4,148.0 L534.1,150.0 L538.0,150.0 L540.7,152.0 L544.6,152.0 L547.3,154.0 L551.3,154.0 L553.9,155.0 L557.9,155.0 L560.5,155.5 L564.5,155.5 L567.1,155.0 L571.1,155.0 L573.7,155.0 L577.7,155.0 L580.3,156.5 L584.3,156.5 L586.9,158.0 L590.9,158.0 L593.6,159.0 L597.5,159.0 L600.2,160.0 L604.1,160.0 L606.8,161.5 L610.7,161.5 L613.4,162.5 L617.3,162.5 L620.0,164.0 L624.0,164.0 L626.6,164.5 L630.6,164.5 L633.2,164.5 L637.2,164.5 L639.8,166.0 L643.8,166.0 L646.4,167.5 L650.4,167.5 L653.0,168.5 L657.0,168.5 L659.6,169.5 L663.6,169.5 L666.2,170.5 L670.2,170.5 L672.9,172.0 L676.8,172.0 L679.5,173.5 L683.4,173.5 L686.1,175.0 L690.0,175.0 L692.7,176.5 L696.7,176.5 L699.3,178.0 L703.3,178.0 L705.9,180.5 L709.9,180.5 L712.5,183.0 L716.5,183.0 L719.1,184.5 L723.1,184.5 L725.7,186.5 L729.7,186.5 L732.3,187.5 L736.3,187.5 L738.9,189.0 L742.9,189.0 L745.6,190.5 L749.5,190.5 L752.2,191.5 L756.1,191.5 L758.8,193.0 L762.7,193.0 L765.4,194.5 L769.3,194.5 L772.0,196.0 L776.0,196.0 L778.6,196.5 L782.6,196.5 L785.2,196.5 L789.2,196.5 L791.8,196.5 L795.8,196.5 L798.4,196.0 L802.4,196.0 L805.0,195.5 L809.0,195.5 L811.6,194.5 L815.6,194.5 L818.3,193.0 L822.2,193.0 L824.9,191.5 L828.8,191.5 L831.5,189.5 L835.4,189.5 L838.1,187.5 L842.0,187.5 L844.7,185.0 L848.7,185.0 L851.3,183.5 L855.3,183.5 L857.9,181.5 L861.9,181.5 L864.5,180.5 L868.5,180.5 L871.1,179.0 L875.1,179.0 L877.7,178.0 L881.7,178.0 L884.3,177.5 L888.3,177.5 L891.0,177.0 L891.7,177.0" fill="none" stroke="#c22222" stroke-width="1.5" stroke-linejoin="round"/>
<path d="M32.6,65.0 L34.9,65.0 L39.2,73.0 L41.5,73.0 L45.8,78.5 L48.1,78.5 L52.4,84.0 L54.8,84.0 L59.0,88.0 L61.4,88.0 L65.7,92.0 L68.0,92.0 L72.3,97.0 L74.6,97.0 L78.9,101.5 L81.2,101.5 L85.5,106.0 L87.8,106.0 L92.1,111.0 L94.4,111.0 L98.7,115.5 L101.0,115.5 L105.3,117.0 L107.6,117.0 L111.9,118.5 L114.2,118.5 L118.5,120.0 L120.8,120.0 L125.1,122.5 L127.5,122.5 L131.7,122.0 L134.1,122.0 L138.4,121.0 L140.7,121.0 L145.0,120.5 L147.3,120.5 L151.6,120.5 L153.9,120.5 L158.2,120.5 L160.5,120.5 L164.8,119.0 L167.1,119.0 L171.4,118.5 L173.7,118.5 L178.0,118.5 L180.3,118.5 L184.6,118.5 L186.9,118.5 L191.2,119.5 L193.5,119.5 L197.8,120.0 L200.1,120.0 L204.4,120.5 L206.8,120.5 L211.1,119.0 L213.4,119.0 L217.7,118.5 L220.0,118.5 L224.3,118.5 L226.6,118.5 L230.9,118.5 L233.2,118.5 L237.5,118.5 L239.8,118.5 L244.1,118.5 L246.4,118.5 L250.7,119.0 L253.0,119.0 L257.3,120.5 L259.6,120.5 L263.9,122.0 L266.2,122.0 L270.5,123.0 L272.8,123.0 L277.1,122.0 L279.5,122.0 L283.8,121.5 L286.1,121.5 L290.4,121.0 L292.7,121.0 L297.0,121.5 L299.3,121.5 L303.6,121.5 L305.9,121.5 L310.2,121.0 L312.5,121.0 L316.8,121.0 L319.1,121.0 L323.4,119.0 L325.7,119.0 L330.0,118.5 L332.3,118.5 L336.6,118.5 L338.9,118.5 L343.2,119.5 L345.5,119.5 L349.8,121.5 L352.2,121.5 L356.5,122.5 L358.8,122.5 L363.1,122.5 L365.4,122.5 L369.7,122.5 L372.0,122.5 L376.3,122.5 L378.6,122.5 L382.9,122.5 L385.2,122.5 L389.5,123.0 L391.8,123.0 L396.1,123.0 L398.4,123.0 L402.7,124.5 L405.0,124.5 L409.3,125.5 L411.6,125.5 L415.9,127.5 L418.2,127.5 L422.5,130.5 L424.9,130.5 L429.2,133.0 L431.5,133.0 L435.8,135.0 L438.1,135.0 L442.4,136.5 L444.7,136.5 L449.0,138.0 L451.3,138.0 L455.6,140.0 L457.9,140.0 L462.2,143.0 L464.5,143.0 L468.8,147.0 L471.1,147.0 L475.4,150.0 L477.7,150.0 L482.0,153.5 L484.3,153.5 L488.6,157.5 L490.9,157.5 L495.2,162.5 L497.6,162.5 L501.9,166.5 L504.2,166.5 L508.5,170.0 L510.8,170.0 L515.1,172.5 L517.4,172.5 L521.7,175.0 L524.0,175.0 L528.3,177.0 L530.6,177.0 L534.9,180.0 L537.2,180.0 L541.5,182.0 L543.8,182.0 L548.1,183.0 L550.4,183.0 L554.7,182.5 L557.0,182.5 L561.3,180.5 L563.6,180.5 L567.9,178.0 L570.3,178.0 L574.5,176.5 L576.9,176.5 L581.2,177.0 L583.5,177.0 L587.8,180.0 L590.1,180.0 L594.4,181.0 L596.7,181.0 L601.0,180.5 L603.3,180.5 L607.6,180.5 L609.9,180.5 L614.2,182.5 L616.5,182.5 L620.8,183.0 L623.1,183.0 L627.4,183.0 L629.7,183.0 L634.0,184.5 L636.3,184.5 L640.6,185.0 L643.0,185.0 L647.2,187.0 L649.6,187.0 L653.9,188.0 L656.2,188.0 L660.5,188.5 L662.8,188.5 L667.1,189.5 L669.4,189.5 L673.7,191.0 L676.0,191.0 L680.3,193.5 L682.6,193.5 L686.9,196.5 L689.2,196.5 L693.5,199.0 L695.8,199.0 L700.1,201.5 L702.4,201.5 L706.7,204.5 L709.0,204.5 L713.3,208.5 L715.7,208.5 L719.9,212.0 L722.3,212.0 L726.6,214.0 L728.9,214.0 L733.2,214.5 L735.5,214.5 L739.8,215.0 L742.1,215.0 L746.4,215.0 L748.7,215.0 L753.0,215.5 L755.3,215.5 L759.6,216.5 L761.9,216.5 L766.2,217.0 L768.5,217.0 L772.8,217.0 L775.1,217.0 L779.4,217.5 L781.7,217.5 L786.0,216.5 L788.4,216.5 L792.6,215.0 L795.0,215.0 L799.3,212.5 L801.6,212.5 L805.9,209.5 L808.2,209.5 L812.5,205.5 L814.8,205.5 L819.1,200.5 L821.4,200.5 L825.7,194.5 L828.0,194.5 L832.3,189.0 L834.6,189.0 L838.9,183.0 L841.2,183.0 L845.5,179.0 L847.8,179.0 L852.1,175.0 L854.4,175.0 L858.7,171.5 L861.0,171.5 L865.3,168.5 L867.7,168.5 L872.0,166.5 L874.3,166.5 L878.6,166.5 L880.9,166.5 L885.2,166.5 L887.5,166.5 L891.8,165.0 L891.7,165.0" fill="none" stroke="#1515c8" stroke-width="1.2" stroke-linejoin="round"/>
<line x1="18" y1="219" x2="901" y2="219" stroke="#1cc01c" stroke-width="1.45"/>
</g>
<rect x="456.5" y="216" width="6" height="6" fill="#dcdcdc"/><rect x="457" y="218.3" width="5" height="1.4" fill="#e060d0"/>
<rect x="17" y="217" width="3" height="4" fill="#e8a0e0"/><rect x="898.5" y="216.5" width="3.5" height="5" fill="#e8b0e0"/>
<rect x="18" y="42" width="275" height="14.6" fill="#3a424b"/>
<text x="18" y="52.9" font-size="10" fill="#1414d8" textLength="134.5" lengthAdjust="spacingAndGlyphs">Exponential_Moving_Average</text>
<text x="157.5" y="52.9" font-size="10" fill="#de1c1c" textLength="134.5" lengthAdjust="spacingAndGlyphs">Exponential_Moving_Average</text>
<rect x="17.5" y="41.5" width="30.5" height="21.5" fill="#f1f1f1"/><rect x="17.5" y="41.5" width="30.5" height="4.3" fill="#cecece"/>
<rect x="21.5" y="49.5" width="9" height="9" rx="1.5" fill="url(#redsq)" stroke="#b01010" stroke-width="0.8"/>
<rect x="34.5" y="49.5" width="9" height="9" rx="1.5" fill="url(#bluesq)" stroke="#0868a8" stroke-width="0.8"/>
<text x="736.5" y="233.5" font-size="11" fill="#ffffff" stroke="#ffffff" stroke-width="0.25" textLength="164" lengthAdjust="spacingAndGlyphs">Горизонтальная линия 106.392</text>
<text x="19.7" y="279" font-size="11" fill="#16167e" textLength="28.5" lengthAdjust="spacingAndGlyphs">MACD</text>
<line x1="20.6" y1="297.5" x2="20.6" y2="307.0" stroke="#c82020" stroke-width="1.15"/>
<line x1="27.2" y1="297.5" x2="27.2" y2="306.8" stroke="#c82020" stroke-width="1.15"/>
<line x1="33.8" y1="297.5" x2="33.8" y2="307.8" stroke="#c82020" stroke-width="1.15"/>
<line x1="40.4" y1="297.5" x2="40.4" y2="309.3" stroke="#c82020" stroke-width="1.15"/>
<line x1="47.0" y1="297.5" x2="47.0" y2="308.5" stroke="#c82020" stroke-width="1.15"/>
<line x1="53.6" y1="297.5" x2="53.6" y2="308.1" stroke="#c82020" stroke-width="1.15"/>
<line x1="60.2" y1="297.5" x2="60.2" y2="307.2" stroke="#c82020" stroke-width="1.15"/>
<line x1="66.8" y1="297.5" x2="66.8" y2="306.7" stroke="#c82020" stroke-width="1.15"/>
<line x1="73.4" y1="297.5" x2="73.4" y2="307.1" stroke="#c82020" stroke-width="1.15"/>
<line x1="80.0" y1="297.5" x2="80.0" y2="307.0" stroke="#c82020" stroke-width="1.15"/>
<line x1="86.6" y1="297.5" x2="86.6" y2="307.8" stroke="#c82020" stroke-width="1.15"/>
<line x1="93.2" y1="297.5" x2="93.2" y2="307.0" stroke="#c82020" stroke-width="1.15"/>
<line x1="99.9" y1="297.5" x2="99.9" y2="306.9" stroke="#c82020" stroke-width="1.15"/>
<line x1="106.5" y1="297.5" x2="106.5" y2="302.5" stroke="#c82020" stroke-width="1.15"/>
<line x1="113.1" y1="297.5" x2="113.1" y2="299.4" stroke="#c82020" stroke-width="1.15"/>
<line x1="119.7" y1="297.5" x2="119.7" y2="298.1" stroke="#c82020" stroke-width="1.15"/>
<line x1="126.3" y1="297.5" x2="126.3" y2="296.8" stroke="#c82020" stroke-width="1.15"/>
<line x1="132.9" y1="297.5" x2="132.9" y2="294.4" stroke="#c82020" stroke-width="1.15"/>
<line x1="139.5" y1="297.5" x2="139.5" y2="290.7" stroke="#c82020" stroke-width="1.15"/>
<line x1="146.1" y1="297.5" x2="146.1" y2="290.4" stroke="#c82020" stroke-width="1.15"/>
<line x1="152.7" y1="297.5" x2="152.7" y2="291.3" stroke="#c82020" stroke-width="1.15"/>
<line x1="159.3" y1="297.5" x2="159.3" y2="290.1" stroke="#c82020" stroke-width="1.15"/>
<line x1="165.9" y1="297.5" x2="165.9" y2="290.2" stroke="#c82020" stroke-width="1.15"/>
<line x1="172.6" y1="297.5" x2="172.6" y2="289.1" stroke="#c82020" stroke-width="1.15"/>
<line x1="179.2" y1="297.5" x2="179.2" y2="289.9" stroke="#c82020" stroke-width="1.15"/>
<line x1="185.8" y1="297.5" x2="185.8" y2="291.4" stroke="#c82020" stroke-width="1.15"/>
<line x1="192.4" y1="297.5" x2="192.4" y2="293.7" stroke="#c82020" stroke-width="1.15"/>
<line x1="199.0" y1="297.5" x2="199.0" y2="294.7" stroke="#c82020" stroke-width="1.15"/>
<line x1="205.6" y1="297.5" x2="205.6" y2="295.5" stroke="#c82020" stroke-width="1.15"/>
<line x1="212.2" y1="297.5" x2="212.2" y2="293.2" stroke="#c82020" stroke-width="1.15"/>
<line x1="218.8" y1="297.5" x2="218.8" y2="293.8" stroke="#c82020" stroke-width="1.15"/>
<line x1="225.4" y1="297.5" x2="225.4" y2="294.1" stroke="#c82020" stroke-width="1.15"/>
<line x1="232.0" y1="297.5" x2="232.0" y2="294.6" stroke="#c82020" stroke-width="1.15"/>
<line x1="238.6" y1="297.5" x2="238.6" y2="294.8" stroke="#c82020" stroke-width="1.15"/>
<line x1="245.3" y1="297.5" x2="245.3" y2="296.5" stroke="#c82020" stroke-width="1.15"/>
<line x1="251.9" y1="297.5" x2="251.9" y2="296.4" stroke="#c82020" stroke-width="1.15"/>
<line x1="265.1" y1="297.5" x2="265.1" y2="300.4" stroke="#c82020" stroke-width="1.15"/>
<line x1="271.7" y1="297.5" x2="271.7" y2="299.6" stroke="#c82020" stroke-width="1.15"/>
<line x1="284.9" y1="297.5" x2="284.9" y2="296.9" stroke="#c82020" stroke-width="1.15"/>
<line x1="291.5" y1="297.5" x2="291.5" y2="295.8" stroke="#c82020" stroke-width="1.15"/>
<line x1="298.1" y1="297.5" x2="298.1" y2="295.6" stroke="#c82020" stroke-width="1.15"/>
<line x1="304.7" y1="297.5" x2="304.7" y2="296.7" stroke="#c82020" stroke-width="1.15"/>
<line x1="311.3" y1="297.5" x2="311.3" y2="296.3" stroke="#c82020" stroke-width="1.15"/>
<line x1="318.0" y1="297.5" x2="318.0" y2="296.2" stroke="#c82020" stroke-width="1.15"/>
<line x1="324.6" y1="297.5" x2="324.6" y2="296.6" stroke="#c82020" stroke-width="1.15"/>
<line x1="331.2" y1="297.5" x2="331.2" y2="296.2" stroke="#c82020" stroke-width="1.15"/>
<line x1="337.8" y1="297.5" x2="337.8" y2="296.0" stroke="#c82020" stroke-width="1.15"/>
<line x1="344.4" y1="297.5" x2="344.4" y2="296.5" stroke="#c82020" stroke-width="1.15"/>
<line x1="351.0" y1="297.5" x2="351.0" y2="299.1" stroke="#c82020" stroke-width="1.15"/>
<line x1="357.6" y1="297.5" x2="357.6" y2="300.3" stroke="#c82020" stroke-width="1.15"/>
<line x1="364.2" y1="297.5" x2="364.2" y2="300.3" stroke="#c82020" stroke-width="1.15"/>
<line x1="370.8" y1="297.5" x2="370.8" y2="298.8" stroke="#c82020" stroke-width="1.15"/>
<line x1="377.4" y1="297.5" x2="377.4" y2="298.8" stroke="#c82020" stroke-width="1.15"/>
<line x1="390.7" y1="297.5" x2="390.7" y2="298.8" stroke="#c82020" stroke-width="1.15"/>
<line x1="397.3" y1="297.5" x2="397.3" y2="299.9" stroke="#c82020" stroke-width="1.15"/>
<line x1="403.9" y1="297.5" x2="403.9" y2="300.1" stroke="#c82020" stroke-width="1.15"/>
<line x1="410.5" y1="297.5" x2="410.5" y2="299.7" stroke="#c82020" stroke-width="1.15"/>
<line x1="417.1" y1="297.5" x2="417.1" y2="301.5" stroke="#c82020" stroke-width="1.15"/>
<line x1="423.7" y1="297.5" x2="423.7" y2="303.5" stroke="#c82020" stroke-width="1.15"/>
<line x1="430.3" y1="297.5" x2="430.3" y2="303.8" stroke="#c82020" stroke-width="1.15"/>
<line x1="436.9" y1="297.5" x2="436.9" y2="302.9" stroke="#c82020" stroke-width="1.15"/>
<line x1="443.5" y1="297.5" x2="443.5" y2="302.5" stroke="#c82020" stroke-width="1.15"/>
<line x1="450.1" y1="297.5" x2="450.1" y2="301.4" stroke="#c82020" stroke-width="1.15"/>
<line x1="456.7" y1="297.5" x2="456.7" y2="300.6" stroke="#c82020" stroke-width="1.15"/>
<line x1="463.4" y1="297.5" x2="463.4" y2="301.6" stroke="#c82020" stroke-width="1.15"/>
<line x1="470.0" y1="297.5" x2="470.0" y2="304.6" stroke="#c82020" stroke-width="1.15"/>
<line x1="476.6" y1="297.5" x2="476.6" y2="304.2" stroke="#c82020" stroke-width="1.15"/>
<line x1="483.2" y1="297.5" x2="483.2" y2="305.0" stroke="#c82020" stroke-width="1.15"/>
<line x1="489.8" y1="297.5" x2="489.8" y2="305.9" stroke="#c82020" stroke-width="1.15"/>
<line x1="496.4" y1="297.5" x2="496.4" y2="306.0" stroke="#c82020" stroke-width="1.15"/>
<line x1="503.0" y1="297.5" x2="503.0" y2="306.3" stroke="#c82020" stroke-width="1.15"/>
<line x1="509.6" y1="297.5" x2="509.6" y2="303.9" stroke="#c82020" stroke-width="1.15"/>
<line x1="516.2" y1="297.5" x2="516.2" y2="302.9" stroke="#c82020" stroke-width="1.15"/>
<line x1="522.8" y1="297.5" x2="522.8" y2="301.2" stroke="#c82020" stroke-width="1.15"/>
<line x1="529.4" y1="297.5" x2="529.4" y2="299.2" stroke="#c82020" stroke-width="1.15"/>
<line x1="536.1" y1="297.5" x2="536.1" y2="299.7" stroke="#c82020" stroke-width="1.15"/>
<line x1="542.7" y1="297.5" x2="542.7" y2="298.8" stroke="#c82020" stroke-width="1.15"/>
<line x1="549.3" y1="297.5" x2="549.3" y2="296.9" stroke="#c82020" stroke-width="1.15"/>
<line x1="555.9" y1="297.5" x2="555.9" y2="294.8" stroke="#c82020" stroke-width="1.15"/>
<line x1="562.5" y1="297.5" x2="562.5" y2="292.7" stroke="#c82020" stroke-width="1.15"/>
<line x1="569.1" y1="297.5" x2="569.1" y2="289.8" stroke="#c82020" stroke-width="1.15"/>
<line x1="575.7" y1="297.5" x2="575.7" y2="289.6" stroke="#c82020" stroke-width="1.15"/>
<line x1="582.3" y1="297.5" x2="582.3" y2="291.4" stroke="#c82020" stroke-width="1.15"/>
<line x1="588.9" y1="297.5" x2="588.9" y2="294.2" stroke="#c82020" stroke-width="1.15"/>
<line x1="595.5" y1="297.5" x2="595.5" y2="294.9" stroke="#c82020" stroke-width="1.15"/>
<line x1="602.1" y1="297.5" x2="602.1" y2="294.5" stroke="#c82020" stroke-width="1.15"/>
<line x1="608.8" y1="297.5" x2="608.8" y2="295.3" stroke="#c82020" stroke-width="1.15"/>
<line x1="615.4" y1="297.5" x2="615.4" y2="296.3" stroke="#c82020" stroke-width="1.15"/>
<line x1="622.0" y1="297.5" x2="622.0" y2="296.3" stroke="#c82020" stroke-width="1.15"/>
<line x1="628.6" y1="297.5" x2="628.6" y2="296.0" stroke="#c82020" stroke-width="1.15"/>
<line x1="635.2" y1="297.5" x2="635.2" y2="295.9" stroke="#c82020" stroke-width="1.15"/>
<line x1="641.8" y1="297.5" x2="641.8" y2="296.7" stroke="#c82020" stroke-width="1.15"/>
<line x1="648.4" y1="297.5" x2="648.4" y2="297.9" stroke="#c82020" stroke-width="1.15"/>
<line x1="655.0" y1="297.5" x2="655.0" y2="298.9" stroke="#c82020" stroke-width="1.15"/>
<line x1="661.6" y1="297.5" x2="661.6" y2="298.5" stroke="#c82020" stroke-width="1.15"/>
<line x1="668.2" y1="297.5" x2="668.2" y2="298.0" stroke="#c82020" stroke-width="1.15"/>
<line x1="674.8" y1="297.5" x2="674.8" y2="298.8" stroke="#c82020" stroke-width="1.15"/>
<line x1="681.4" y1="297.5" x2="681.4" y2="299.5" stroke="#c82020" stroke-width="1.15"/>
<line x1="688.1" y1="297.5" x2="688.1" y2="301.0" stroke="#c82020" stroke-width="1.15"/>
<line x1="694.7" y1="297.5" x2="694.7" y2="302.2" stroke="#c82020" stroke-width="1.15"/>
<line x1="701.3" y1="297.5" x2="701.3" y2="301.7" stroke="#c82020" stroke-width="1.15"/>
<line x1="707.9" y1="297.5" x2="707.9" y2="302.7" stroke="#c82020" stroke-width="1.15"/>
<line x1="714.5" y1="297.5" x2="714.5" y2="303.0" stroke="#c82020" stroke-width="1.15"/>
<line x1="721.1" y1="297.5" x2="721.1" y2="303.5" stroke="#c82020" stroke-width="1.15"/>
<line x1="727.7" y1="297.5" x2="727.7" y2="302.5" stroke="#c82020" stroke-width="1.15"/>
<line x1="734.3" y1="297.5" x2="734.3" y2="300.7" stroke="#c82020" stroke-width="1.15"/>
<line x1="747.5" y1="297.5" x2="747.5" y2="296.7" stroke="#c82020" stroke-width="1.15"/>
<line x1="754.1" y1="297.5" x2="754.1" y2="296.1" stroke="#c82020" stroke-width="1.15"/>
<line x1="760.8" y1="297.5" x2="760.8" y2="296.0" stroke="#c82020" stroke-width="1.15"/>
<line x1="767.4" y1="297.5" x2="767.4" y2="296.3" stroke="#c82020" stroke-width="1.15"/>
<line x1="774.0" y1="297.5" x2="774.0" y2="295.9" stroke="#c82020" stroke-width="1.15"/>
<line x1="780.6" y1="297.5" x2="780.6" y2="294.8" stroke="#c82020" stroke-width="1.15"/>
<line x1="787.2" y1="297.5" x2="787.2" y2="293.5" stroke="#c82020" stroke-width="1.15"/>
<line x1="793.8" y1="297.5" x2="793.8" y2="293.1" stroke="#c82020" stroke-width="1.15"/>
<line x1="800.4" y1="297.5" x2="800.4" y2="291.4" stroke="#c82020" stroke-width="1.15"/>
<line x1="807.0" y1="297.5" x2="807.0" y2="290.0" stroke="#c82020" stroke-width="1.15"/>
<line x1="813.6" y1="297.5" x2="813.6" y2="287.8" stroke="#c82020" stroke-width="1.15"/>
<line x1="820.2" y1="297.5" x2="820.2" y2="287.0" stroke="#c82020" stroke-width="1.15"/>
<line x1="826.8" y1="297.5" x2="826.8" y2="284.6" stroke="#c82020" stroke-width="1.15"/>
<line x1="833.5" y1="297.5" x2="833.5" y2="283.3" stroke="#c82020" stroke-width="1.15"/>
<line x1="840.1" y1="297.5" x2="840.1" y2="283.1" stroke="#c82020" stroke-width="1.15"/>
<line x1="846.7" y1="297.5" x2="846.7" y2="285.4" stroke="#c82020" stroke-width="1.15"/>
<line x1="853.3" y1="297.5" x2="853.3" y2="287.2" stroke="#c82020" stroke-width="1.15"/>
<line x1="859.9" y1="297.5" x2="859.9" y2="288.7" stroke="#c82020" stroke-width="1.15"/>
<line x1="866.5" y1="297.5" x2="866.5" y2="290.8" stroke="#c82020" stroke-width="1.15"/>
<line x1="873.1" y1="297.5" x2="873.1" y2="293.9" stroke="#c82020" stroke-width="1.15"/>
<line x1="886.3" y1="297.5" x2="886.3" y2="298.3" stroke="#c82020" stroke-width="1.15"/>
<line x1="892.9" y1="297.5" x2="892.9" y2="300.5" stroke="#c82020" stroke-width="1.15"/>
<polyline points="17.5,307.2 20.5,310.0 26.7,311.7 33.3,315.5 41.7,320.0 53.7,323.3 66.7,325.5 76.7,329.3 86.7,333.8 93.3,335.0 99.5,336.7 106.5,333.8 113.5,330.5 119.5,329.3 126.5,328.0 132.7,323.8 139.3,318.0 146.3,315.5 152.5,314.7 159.5,312.2 166.3,308.8 172.5,306.3 179.5,305.0 185.3,304.3 192.5,305.5 206.0,305.5 212.7,302.2 225.5,301.3 238.5,300.0 245.3,301.7 251.5,300.5 258.5,301.7 265.3,304.7 271.5,304.7 278.3,302.7 284.5,301.3 291.3,300.0 298.3,298.8 304.5,299.7 311.3,299.3 317.5,298.0 324.5,298.3 331.3,297.2 344.3,296.7 350.7,300.0 357.2,301.3 364.3,301.3 370.5,300.5 377.5,300.5 384.3,298.8 390.7,300.5 397.7,301.7 410.7,302.2 417.7,304.7 423.5,307.2 430.3,309.3 436.7,309.7 443.3,310.5 450.7,309.3 456.5,309.3 463.5,311.7 469.5,315.5 476.5,317.2 483.3,318.8 489.5,321.8 495.7,323.8 502.7,325.5 509.0,324.7 517.3,324.7 523.2,323.3 529.3,322.2 535.7,322.7 543.2,321.7 549.8,319.7 556.5,316.7 562.7,312.2 568.5,308.0 576.2,305.2 582.8,305.2 588.7,307.2 595.3,307.2 602.0,305.5 608.7,306.3 622.0,306.3 628.7,305.2 642.0,305.0 648.7,306.3 655.3,307.2 668.7,306.3 675.3,307.2 682.0,308.8 687.8,311.0 694.5,312.2 702.0,312.7 708.7,314.7 714.5,317.2 720.3,318.5 727.8,318.5 734.5,316.7 740.3,314.7 747.0,312.7 753.7,312.2 760.3,311.0 767.5,311.0 774.2,309.7 780.8,307.7 786.7,305.5 793.3,303.3 800.0,300.5 806.7,296.0 813.3,292.2 820.0,288.0 826.7,282.7 833.3,277.2 840.0,273.3 846.7,272.2 853.3,271.0 860.0,270.5 866.7,271.0 873.3,272.7 880.0,275.5 886.7,277.2 892.5,279.3" fill="none" stroke="#101078" stroke-width="1.15" stroke-linejoin="round"/>
<circle cx="20.6" cy="300.5" r="1.4" fill="#de2020"/>
<circle cx="27.2" cy="302.7" r="1.4" fill="#de2020"/>
<circle cx="33.8" cy="305.5" r="1.4" fill="#de2020"/>
<circle cx="40.4" cy="307.5" r="1.4" fill="#de2020"/>
<circle cx="47.0" cy="310.5" r="1.4" fill="#de2020"/>
<circle cx="53.6" cy="312.7" r="1.4" fill="#de2020"/>
<circle cx="60.2" cy="314.7" r="1.4" fill="#de2020"/>
<circle cx="66.8" cy="316.3" r="1.4" fill="#de2020"/>
<circle cx="73.4" cy="318.5" r="1.4" fill="#de2020"/>
<circle cx="80.0" cy="321.3" r="1.4" fill="#de2020"/>
<circle cx="86.6" cy="323.5" r="1.4" fill="#de2020"/>
<circle cx="93.2" cy="325.5" r="1.4" fill="#de2020"/>
<circle cx="99.9" cy="327.2" r="1.4" fill="#de2020"/>
<circle cx="106.5" cy="328.8" r="1.4" fill="#de2020"/>
<circle cx="113.1" cy="328.8" r="1.4" fill="#de2020"/>
<circle cx="119.7" cy="328.7" r="1.4" fill="#de2020"/>
<circle cx="126.3" cy="328.7" r="1.4" fill="#de2020"/>
<circle cx="132.9" cy="326.7" r="1.4" fill="#de2020"/>
<circle cx="139.5" cy="324.7" r="1.4" fill="#de2020"/>
<circle cx="146.1" cy="322.7" r="1.4" fill="#de2020"/>
<circle cx="152.7" cy="320.8" r="1.4" fill="#de2020"/>
<circle cx="159.3" cy="319.7" r="1.4" fill="#de2020"/>
<circle cx="165.9" cy="316.3" r="1.4" fill="#de2020"/>
<circle cx="172.6" cy="314.7" r="1.4" fill="#de2020"/>
<circle cx="179.2" cy="312.7" r="1.4" fill="#de2020"/>
<circle cx="185.8" cy="310.5" r="1.4" fill="#de2020"/>
<circle cx="192.4" cy="309.3" r="1.4" fill="#de2020"/>
<circle cx="199.0" cy="308.3" r="1.4" fill="#de2020"/>
<circle cx="205.6" cy="307.5" r="1.4" fill="#de2020"/>
<circle cx="212.2" cy="306.7" r="1.4" fill="#de2020"/>
<circle cx="218.8" cy="305.5" r="1.4" fill="#de2020"/>
<circle cx="225.4" cy="304.7" r="1.4" fill="#de2020"/>
<circle cx="232.0" cy="303.5" r="1.4" fill="#de2020"/>
<circle cx="238.6" cy="302.7" r="1.4" fill="#de2020"/>
<circle cx="245.3" cy="302.7" r="1.4" fill="#de2020"/>
<circle cx="251.9" cy="301.7" r="1.4" fill="#de2020"/>
<circle cx="258.5" cy="301.7" r="1.4" fill="#de2020"/>
<circle cx="265.1" cy="301.7" r="1.4" fill="#de2020"/>
<circle cx="271.7" cy="302.5" r="1.4" fill="#de2020"/>
<circle cx="278.3" cy="302.5" r="1.4" fill="#de2020"/>
<circle cx="284.9" cy="301.8" r="1.4" fill="#de2020"/>
<circle cx="291.5" cy="301.7" r="1.4" fill="#de2020"/>
<circle cx="298.1" cy="300.7" r="1.4" fill="#de2020"/>
<circle cx="304.7" cy="300.5" r="1.4" fill="#de2020"/>
<circle cx="311.3" cy="300.5" r="1.4" fill="#de2020"/>
<circle cx="318.0" cy="299.3" r="1.4" fill="#de2020"/>
<circle cx="324.6" cy="299.2" r="1.4" fill="#de2020"/>
<circle cx="331.2" cy="298.5" r="1.4" fill="#de2020"/>
<circle cx="337.8" cy="298.5" r="1.4" fill="#de2020"/>
<circle cx="344.4" cy="297.7" r="1.4" fill="#de2020"/>
<circle cx="351.0" cy="298.5" r="1.4" fill="#de2020"/>
<circle cx="357.6" cy="298.5" r="1.4" fill="#de2020"/>
<circle cx="364.2" cy="298.5" r="1.4" fill="#de2020"/>
<circle cx="370.8" cy="299.2" r="1.4" fill="#de2020"/>
<circle cx="377.4" cy="299.2" r="1.4" fill="#de2020"/>
<circle cx="384.0" cy="299.2" r="1.4" fill="#de2020"/>
<circle cx="390.7" cy="299.2" r="1.4" fill="#de2020"/>
<circle cx="397.3" cy="299.2" r="1.4" fill="#de2020"/>
<circle cx="403.9" cy="299.3" r="1.4" fill="#de2020"/>
<circle cx="410.5" cy="300.0" r="1.4" fill="#de2020"/>
<circle cx="417.1" cy="300.5" r="1.4" fill="#de2020"/>
<circle cx="423.7" cy="301.3" r="1.4" fill="#de2020"/>
<circle cx="430.3" cy="303.0" r="1.4" fill="#de2020"/>
<circle cx="436.9" cy="304.3" r="1.4" fill="#de2020"/>
<circle cx="443.5" cy="305.5" r="1.4" fill="#de2020"/>
<circle cx="450.1" cy="305.5" r="1.4" fill="#de2020"/>
<circle cx="456.7" cy="306.3" r="1.4" fill="#de2020"/>
<circle cx="463.4" cy="307.5" r="1.4" fill="#de2020"/>
<circle cx="470.0" cy="308.5" r="1.4" fill="#de2020"/>
<circle cx="476.6" cy="310.5" r="1.4" fill="#de2020"/>
<circle cx="483.2" cy="311.3" r="1.4" fill="#de2020"/>
<circle cx="489.8" cy="313.5" r="1.4" fill="#de2020"/>
<circle cx="496.4" cy="315.5" r="1.4" fill="#de2020"/>
<circle cx="503.0" cy="316.7" r="1.4" fill="#de2020"/>
<circle cx="509.6" cy="318.3" r="1.4" fill="#de2020"/>
<circle cx="516.2" cy="319.3" r="1.4" fill="#de2020"/>
<circle cx="522.8" cy="319.7" r="1.4" fill="#de2020"/>
<circle cx="529.4" cy="320.5" r="1.4" fill="#de2020"/>
<circle cx="536.1" cy="320.5" r="1.4" fill="#de2020"/>
<circle cx="542.7" cy="320.5" r="1.4" fill="#de2020"/>
<circle cx="549.3" cy="320.5" r="1.4" fill="#de2020"/>
<circle cx="555.9" cy="319.7" r="1.4" fill="#de2020"/>
<circle cx="562.5" cy="317.2" r="1.4" fill="#de2020"/>
<circle cx="569.1" cy="315.5" r="1.4" fill="#de2020"/>
<circle cx="575.7" cy="313.3" r="1.4" fill="#de2020"/>
<circle cx="582.3" cy="311.3" r="1.4" fill="#de2020"/>
<circle cx="588.9" cy="310.5" r="1.4" fill="#de2020"/>
<circle cx="595.5" cy="309.7" r="1.4" fill="#de2020"/>
<circle cx="602.1" cy="308.5" r="1.4" fill="#de2020"/>
<circle cx="608.8" cy="308.5" r="1.4" fill="#de2020"/>
<circle cx="615.4" cy="307.5" r="1.4" fill="#de2020"/>
<circle cx="622.0" cy="307.5" r="1.4" fill="#de2020"/>
<circle cx="628.6" cy="306.7" r="1.4" fill="#de2020"/>
<circle cx="635.2" cy="306.7" r="1.4" fill="#de2020"/>
<circle cx="641.8" cy="305.8" r="1.4" fill="#de2020"/>
<circle cx="648.4" cy="305.8" r="1.4" fill="#de2020"/>
<circle cx="655.0" cy="305.8" r="1.4" fill="#de2020"/>
<circle cx="661.6" cy="305.8" r="1.4" fill="#de2020"/>
<circle cx="668.2" cy="305.8" r="1.4" fill="#de2020"/>
<circle cx="674.8" cy="305.8" r="1.4" fill="#de2020"/>
<circle cx="681.4" cy="306.7" r="1.4" fill="#de2020"/>
<circle cx="688.1" cy="307.5" r="1.4" fill="#de2020"/>
<circle cx="694.7" cy="307.5" r="1.4" fill="#de2020"/>
<circle cx="701.3" cy="308.5" r="1.4" fill="#de2020"/>
<circle cx="707.9" cy="309.3" r="1.4" fill="#de2020"/>
<circle cx="714.5" cy="311.7" r="1.4" fill="#de2020"/>
<circle cx="721.1" cy="312.5" r="1.4" fill="#de2020"/>
<circle cx="727.7" cy="313.5" r="1.4" fill="#de2020"/>
<circle cx="734.3" cy="313.5" r="1.4" fill="#de2020"/>
<circle cx="740.9" cy="314.7" r="1.4" fill="#de2020"/>
<circle cx="747.5" cy="313.5" r="1.4" fill="#de2020"/>
<circle cx="754.1" cy="313.5" r="1.4" fill="#de2020"/>
<circle cx="760.8" cy="312.5" r="1.4" fill="#de2020"/>
<circle cx="767.4" cy="312.2" r="1.4" fill="#de2020"/>
<circle cx="774.0" cy="311.3" r="1.4" fill="#de2020"/>
<circle cx="780.6" cy="310.5" r="1.4" fill="#de2020"/>
<circle cx="787.2" cy="309.3" r="1.4" fill="#de2020"/>
<circle cx="793.8" cy="307.5" r="1.4" fill="#de2020"/>
<circle cx="800.4" cy="306.3" r="1.4" fill="#de2020"/>
<circle cx="807.0" cy="303.3" r="1.4" fill="#de2020"/>
<circle cx="813.6" cy="301.7" r="1.4" fill="#de2020"/>
<circle cx="820.2" cy="298.3" r="1.4" fill="#de2020"/>
<circle cx="826.8" cy="295.5" r="1.4" fill="#de2020"/>
<circle cx="833.5" cy="291.3" r="1.4" fill="#de2020"/>
<circle cx="840.1" cy="287.7" r="1.4" fill="#de2020"/>
<circle cx="846.7" cy="284.3" r="1.4" fill="#de2020"/>
<circle cx="853.3" cy="281.3" r="1.4" fill="#de2020"/>
<circle cx="859.9" cy="279.3" r="1.4" fill="#de2020"/>
<circle cx="866.5" cy="277.7" r="1.4" fill="#de2020"/>
<circle cx="873.1" cy="276.3" r="1.4" fill="#de2020"/>
<circle cx="879.7" cy="275.2" r="1.4" fill="#de2020"/>
<circle cx="886.3" cy="276.3" r="1.4" fill="#de2020"/>
<circle cx="892.9" cy="276.3" r="1.4" fill="#de2020"/>
<polygon points="80.8,402.3 83.3,400.2 86.7,398.5 96.7,399.3 100.0,399.3 105.8,387.7 113.3,384.3 119.5,388.5 126.5,386.8 133.3,378.5 139.3,373.5 146.3,378.5 152.5,383.5 159.5,378.5 166.3,373.5 172.5,375.2 179.5,378.5 185.3,376.8 192.5,385.2 199.5,380.2 205.5,377.7 212.3,373.0 218.5,374.7 225.5,378.5 232.3,376.8 238.5,379.3 245.3,380.7 251.5,376.8 258.5,381.8 265.3,387.3 271.5,381.3 278.3,375.2 284.5,375.2 291.3,373.0 298.3,379.0 304.5,380.7 311.3,376.8 317.5,373.5 324.5,375.7 331.3,374.7 337.5,374.7 344.3,380.2 350.7,387.3 357.2,382.7 364.3,380.2 370.5,375.2 377.5,378.5 384.3,376.0 390.7,379.3 397.7,384.7 403.7,381.8 410.7,380.2 417.7,390.2 423.5,392.3 430.3,395.7 436.7,385.2 443.3,386.5 450.7,385.2 456.5,386.5 463.5,393.5 469.5,402.7 476.5,392.7 483.3,393.0 489.5,399.0 496.5,399.3 502.7,399.7 509.8,393.5 516.7,392.3 523.2,393.5 529.3,387.3 535.7,394.7 543.2,388.5 549.8,390.2 555.7,376.8 562.7,370.2 568.5,370.6 575.0,374.7 582.5,381.0 589.0,383.5 595.8,381.8 601.7,376.8 608.3,381.8 621.7,381.8 628.3,378.5 635.8,379.3 642.5,383.5 648.8,389.0 655.0,386.0 661.7,379.0 668.3,382.7 675.0,387.3 681.7,386.3 688.0,393.5 694.2,390.2 700.8,389.3 707.5,394.3 714.7,398.5 720.8,394.3 727.5,388.5 734.2,388.5 740.2,381.0 746.8,378.0 753.5,384.3 760.2,385.5 766.8,383.5 773.5,379.3 780.2,381.0 786.0,369.3 793.5,372.3 800.2,367.7 806.8,361.0 813.0,362.3 820.2,355.2 826.8,351.0 833.5,348.5 839.3,348.5 845.2,355.2 852.7,360.2 859.3,356.3 866.0,360.7 872.7,364.3 879.3,373.5 886.8,373.5 891.8,371.3 891.8,401 80.8,401" fill="url(#rsig)"/>
<line x1="18" y1="354.8" x2="892" y2="354.8" stroke="#1616ac" stroke-width="1.8"/>
<line x1="18" y1="400.8" x2="892" y2="400.8" stroke="#1616ac" stroke-width="1.8"/>
<polyline points="80.8,402.3 83.3,400.2 86.7,398.5 96.7,399.3 100.0,399.3 105.8,387.7 113.3,384.3 119.5,388.5 126.5,386.8 133.3,378.5 139.3,373.5 146.3,378.5 152.5,383.5 159.5,378.5 166.3,373.5 172.5,375.2 179.5,378.5 185.3,376.8 192.5,385.2 199.5,380.2 205.5,377.7 212.3,373.0 218.5,374.7 225.5,378.5 232.3,376.8 238.5,379.3 245.3,380.7 251.5,376.8 258.5,381.8 265.3,387.3 271.5,381.3 278.3,375.2 284.5,375.2 291.3,373.0 298.3,379.0 304.5,380.7 311.3,376.8 317.5,373.5 324.5,375.7 331.3,374.7 337.5,374.7 344.3,380.2 350.7,387.3 357.2,382.7 364.3,380.2 370.5,375.2 377.5,378.5 384.3,376.0 390.7,379.3 397.7,384.7 403.7,381.8 410.7,380.2 417.7,390.2 423.5,392.3 430.3,395.7 436.7,385.2 443.3,386.5 450.7,385.2 456.5,386.5 463.5,393.5 469.5,402.7 476.5,392.7 483.3,393.0 489.5,399.0 496.5,399.3 502.7,399.7 509.8,393.5 516.7,392.3 523.2,393.5 529.3,387.3 535.7,394.7 543.2,388.5 549.8,390.2 555.7,376.8 562.7,370.2 568.5,370.6 575.0,374.7 582.5,381.0 589.0,383.5 595.8,381.8 601.7,376.8 608.3,381.8 621.7,381.8 628.3,378.5 635.8,379.3 642.5,383.5 648.8,389.0 655.0,386.0 661.7,379.0 668.3,382.7 675.0,387.3 681.7,386.3 688.0,393.5 694.2,390.2 700.8,389.3 707.5,394.3 714.7,398.5 720.8,394.3 727.5,388.5 734.2,388.5 740.2,381.0 746.8,378.0 753.5,384.3 760.2,385.5 766.8,383.5 773.5,379.3 780.2,381.0 786.0,369.3 793.5,372.3 800.2,367.7 806.8,361.0 813.0,362.3 820.2,355.2 826.8,351.0 833.5,348.5 839.3,348.5 845.2,355.2 852.7,360.2 859.3,356.3 866.0,360.7 872.7,364.3 879.3,373.5 886.8,373.5 891.8,371.3" fill="none" stroke="#e4842c" stroke-width="1.05" stroke-linejoin="round"/>
<polyline points="80.8,402.3 83.3,400.2 86.7,398.5 96.7,399.3 100.0,399.3 105.8,387.7 113.3,384.3 119.5,388.5 126.5,386.8 133.3,378.5 139.3,373.5 146.3,378.5 152.5,383.5 159.5,378.5 166.3,373.5 172.5,375.2 179.5,378.5 185.3,376.8 192.5,385.2 199.5,380.2 205.5,377.7 212.3,373.0 218.5,374.7 225.5,378.5 232.3,376.8 238.5,379.3 245.3,380.7 251.5,376.8 258.5,381.8 265.3,387.3 271.5,381.3 278.3,375.2 284.5,375.2 291.3,373.0 298.3,379.0 304.5,380.7 311.3,376.8 317.5,373.5 324.5,375.7 331.3,374.7 337.5,374.7 344.3,380.2 350.7,387.3 357.2,382.7 364.3,380.2 370.5,375.2 377.5,378.5 384.3,376.0 390.7,379.3 397.7,384.7 403.7,381.8 410.7,380.2 417.7,390.2 423.5,392.3 430.3,395.7 436.7,385.2 443.3,386.5 450.7,385.2 456.5,386.5 463.5,393.5 469.5,402.7 476.5,392.7 483.3,393.0 489.5,399.0 496.5,399.3 502.7,399.7 509.8,393.5 516.7,392.3 523.2,393.5 529.3,387.3 535.7,394.7 543.2,388.5 549.8,390.2 555.7,376.8 562.7,370.2 568.5,370.6 575.0,374.7 582.5,381.0 589.0,383.5 595.8,381.8 601.7,376.8 608.3,381.8 621.7,381.8 628.3,378.5 635.8,379.3 642.5,383.5 648.8,389.0 655.0,386.0 661.7,379.0 668.3,382.7 675.0,387.3 681.7,386.3 688.0,393.5 694.2,390.2 700.8,389.3 707.5,394.3 714.7,398.5 720.8,394.3 727.5,388.5 734.2,388.5 740.2,381.0 746.8,378.0 753.5,384.3 760.2,385.5 766.8,383.5 773.5,379.3 780.2,381.0 786.0,369.3 793.5,372.3 800.2,367.7 806.8,361.0 813.0,362.3 820.2,355.2 826.8,351.0 833.5,348.5 839.3,348.5 845.2,355.2 852.7,360.2 859.3,356.3 866.0,360.7 872.7,364.3 879.3,373.5 886.8,373.5 891.8,371.3" fill="none" stroke="#d030d0" stroke-width="1.3" clip-path="url(#chi)"/>
<polyline points="80.8,402.3 83.3,400.2 86.7,398.5 96.7,399.3 100.0,399.3 105.8,387.7 113.3,384.3 119.5,388.5 126.5,386.8 133.3,378.5 139.3,373.5 146.3,378.5 152.5,383.5 159.5,378.5 166.3,373.5 172.5,375.2 179.5,378.5 185.3,376.8 192.5,385.2 199.5,380.2 205.5,377.7 212.3,373.0 218.5,374.7 225.5,378.5 232.3,376.8 238.5,379.3 245.3,380.7 251.5,376.8 258.5,381.8 265.3,387.3 271.5,381.3 278.3,375.2 284.5,375.2 291.3,373.0 298.3,379.0 304.5,380.7 311.3,376.8 317.5,373.5 324.5,375.7 331.3,374.7 337.5,374.7 344.3,380.2 350.7,387.3 357.2,382.7 364.3,380.2 370.5,375.2 377.5,378.5 384.3,376.0 390.7,379.3 397.7,384.7 403.7,381.8 410.7,380.2 417.7,390.2 423.5,392.3 430.3,395.7 436.7,385.2 443.3,386.5 450.7,385.2 456.5,386.5 463.5,393.5 469.5,402.7 476.5,392.7 483.3,393.0 489.5,399.0 496.5,399.3 502.7,399.7 509.8,393.5 516.7,392.3 523.2,393.5 529.3,387.3 535.7,394.7 543.2,388.5 549.8,390.2 555.7,376.8 562.7,370.2 568.5,370.6 575.0,374.7 582.5,381.0 589.0,383.5 595.8,381.8 601.7,376.8 608.3,381.8 621.7,381.8 628.3,378.5 635.8,379.3 642.5,383.5 648.8,389.0 655.0,386.0 661.7,379.0 668.3,382.7 675.0,387.3 681.7,386.3 688.0,393.5 694.2,390.2 700.8,389.3 707.5,394.3 714.7,398.5 720.8,394.3 727.5,388.5 734.2,388.5 740.2,381.0 746.8,378.0 753.5,384.3 760.2,385.5 766.8,383.5 773.5,379.3 780.2,381.0 786.0,369.3 793.5,372.3 800.2,367.7 806.8,361.0 813.0,362.3 820.2,355.2 826.8,351.0 833.5,348.5 839.3,348.5 845.2,355.2 852.7,360.2 859.3,356.3 866.0,360.7 872.7,364.3 879.3,373.5 886.8,373.5 891.8,371.3" fill="none" stroke="#30d030" stroke-width="1.3" clip-path="url(#clo)"/>
<rect x="19" y="348" width="17" height="10.5" fill="#3a424b"/>
<text x="19.7" y="357.3" font-size="11" fill="#e8862c" textLength="14.8" lengthAdjust="spacingAndGlyphs">RSI</text>
<rect x="17.5" y="41.5" width="884" height="220.0" fill="none" stroke="#9fb3c8" stroke-width="1"/>
<rect x="17.5" y="267.5" width="884" height="72.0" fill="none" stroke="#9fb3c8" stroke-width="1"/>
<rect x="17.5" y="345.5" width="884" height="60.0" fill="none" stroke="#9fb3c8" stroke-width="1"/>
<line x1="902" y1="57.5" x2="905.5" y2="57.5" stroke="#9fb3c8" stroke-width="1"/>
<text x="909.0" y="64.0" font-size="11" fill="#ffffff" stroke="#ffffff" stroke-width="0.25" textLength="32.3" lengthAdjust="spacingAndGlyphs">108.50</text>
<line x1="902" y1="95.5" x2="905.5" y2="95.5" stroke="#9fb3c8" stroke-width="1"/>
<text x="909.0" y="102.0" font-size="11" fill="#ffffff" stroke="#ffffff" stroke-width="0.25" textLength="32.3" lengthAdjust="spacingAndGlyphs">108.00</text>
<line x1="902" y1="133.5" x2="905.5" y2="133.5" stroke="#9fb3c8" stroke-width="1"/>
<text x="909.0" y="140.0" font-size="11" fill="#ffffff" stroke="#ffffff" stroke-width="0.25" textLength="32.3" lengthAdjust="spacingAndGlyphs">107.50</text>
<line x1="902" y1="172.5" x2="905.5" y2="172.5" stroke="#9fb3c8" stroke-width="1"/>
<text x="909.0" y="179.0" font-size="11" fill="#ffffff" stroke="#ffffff" stroke-width="0.25" textLength="32.3" lengthAdjust="spacingAndGlyphs">107.00</text>
<line x1="902" y1="210.5" x2="905.5" y2="210.5" stroke="#9fb3c8" stroke-width="1"/>
<text x="909.0" y="217.0" font-size="11" fill="#ffffff" stroke="#ffffff" stroke-width="0.25" textLength="32.3" lengthAdjust="spacingAndGlyphs">106.50</text>
<line x1="902" y1="249.5" x2="905.5" y2="249.5" stroke="#9fb3c8" stroke-width="1"/>
<text x="909.0" y="256.0" font-size="11" fill="#ffffff" stroke="#ffffff" stroke-width="0.25" textLength="32.3" lengthAdjust="spacingAndGlyphs">106.00</text>
<line x1="902" y1="297.5" x2="905.5" y2="297.5" stroke="#9fb3c8" stroke-width="1"/>
<text x="910.0" y="304.2" font-size="11" fill="#ffffff" stroke="#ffffff" stroke-width="0.25" textLength="21.7" lengthAdjust="spacingAndGlyphs">+0.0</text>
<line x1="902" y1="376.5" x2="905.5" y2="376.5" stroke="#9fb3c8" stroke-width="1"/>
<text x="909.3" y="383.0" font-size="11" fill="#ffffff" stroke="#ffffff" stroke-width="0.25" textLength="11.2" lengthAdjust="spacingAndGlyphs">50</text>
<rect x="901" y="148" width="48.3" height="21" fill="#ffffff"/>
<text x="910.0" y="162.2" font-size="11" fill="#4a4a4a" stroke="#4a4a4a" stroke-width="0.25" textLength="32.3" lengthAdjust="spacingAndGlyphs">107.18</text>
<line x1="53.5" y1="406" x2="53.5" y2="409" stroke="#9fb3c8" stroke-width="1"/>
<text x="41.2" y="428.3" font-size="11" fill="#ffffff" stroke="#ffffff" stroke-width="0.25" textLength="25.9" lengthAdjust="spacingAndGlyphs">14/Вт</text>
<line x1="93.5" y1="406" x2="93.5" y2="409" stroke="#9fb3c8" stroke-width="1"/>
<text x="81.2" y="428.3" font-size="11" fill="#ffffff" stroke="#ffffff" stroke-width="0.25" textLength="27.7" lengthAdjust="spacingAndGlyphs">15/Ср</text>
<line x1="132.5" y1="406" x2="132.5" y2="409" stroke="#9fb3c8" stroke-width="1"/>
<text x="120.2" y="428.3" font-size="11" fill="#ffffff" stroke="#ffffff" stroke-width="0.25" textLength="26.7" lengthAdjust="spacingAndGlyphs">16/Чт</text>
<line x1="172.5" y1="406" x2="172.5" y2="409" stroke="#9fb3c8" stroke-width="1"/>
<text x="160.2" y="428.3" font-size="11" fill="#ffffff" stroke="#ffffff" stroke-width="0.25" textLength="26.7" lengthAdjust="spacingAndGlyphs">17/Пт</text>
<line x1="212.5" y1="406" x2="212.5" y2="409" stroke="#9fb3c8" stroke-width="1"/>
<text x="200.2" y="428.3" font-size="11" fill="#ffffff" stroke="#ffffff" stroke-width="0.25" textLength="28.9" lengthAdjust="spacingAndGlyphs">20/Пн</text>
<line x1="251.5" y1="406" x2="251.5" y2="409" stroke="#9fb3c8" stroke-width="1"/>
<text x="239.2" y="428.3" font-size="11" fill="#ffffff" stroke="#ffffff" stroke-width="0.25" textLength="25.9" lengthAdjust="spacingAndGlyphs">21/Вт</text>
<line x1="291.5" y1="406" x2="291.5" y2="409" stroke="#9fb3c8" stroke-width="1"/>
<text x="279.2" y="428.3" font-size="11" fill="#ffffff" stroke="#ffffff" stroke-width="0.25" textLength="27.7" lengthAdjust="spacingAndGlyphs">22/Ср</text>
<line x1="331.5" y1="406" x2="331.5" y2="409" stroke="#9fb3c8" stroke-width="1"/>
<text x="319.2" y="428.3" font-size="11" fill="#ffffff" stroke="#ffffff" stroke-width="0.25" textLength="26.7" lengthAdjust="spacingAndGlyphs">23/Чт</text>
<line x1="370.5" y1="406" x2="370.5" y2="409" stroke="#9fb3c8" stroke-width="1"/>
<text x="358.2" y="428.3" font-size="11" fill="#ffffff" stroke="#ffffff" stroke-width="0.25" textLength="26.7" lengthAdjust="spacingAndGlyphs">24/Пт</text>
<line x1="410.5" y1="406" x2="410.5" y2="409" stroke="#9fb3c8" stroke-width="1"/>
<text x="398.2" y="428.3" font-size="11" fill="#ffffff" stroke="#ffffff" stroke-width="0.25" textLength="28.9" lengthAdjust="spacingAndGlyphs">27/Пн</text>
<line x1="450.5" y1="406" x2="450.5" y2="409" stroke="#9fb3c8" stroke-width="1"/>
<text x="438.2" y="428.3" font-size="11" fill="#ffffff" stroke="#ffffff" stroke-width="0.25" textLength="25.9" lengthAdjust="spacingAndGlyphs">28/Вт</text>
<line x1="489.5" y1="406" x2="489.5" y2="409" stroke="#9fb3c8" stroke-width="1"/>
<text x="477.2" y="428.3" font-size="11" fill="#ffffff" stroke="#ffffff" stroke-width="0.25" textLength="27.7" lengthAdjust="spacingAndGlyphs">29/Ср</text>
<line x1="529.5" y1="406" x2="529.5" y2="409" stroke="#9fb3c8" stroke-width="1"/>
<text x="517.2" y="428.3" font-size="11" fill="#ffffff" stroke="#ffffff" stroke-width="0.25" textLength="26.7" lengthAdjust="spacingAndGlyphs">30/Чт</text>
<line x1="568.5" y1="406" x2="568.5" y2="409" stroke="#9fb3c8" stroke-width="1"/>
<text x="561.9" y="428.3" font-size="11" fill="#ffffff" stroke="#ffffff" stroke-width="0.25" textLength="20.8" lengthAdjust="spacingAndGlyphs">1/Пт</text>
<line x1="608.5" y1="406" x2="608.5" y2="409" stroke="#9fb3c8" stroke-width="1"/>
<text x="601.9" y="428.3" font-size="11" fill="#ffffff" stroke="#ffffff" stroke-width="0.25" textLength="23.0" lengthAdjust="spacingAndGlyphs">4/Пн</text>
<line x1="648.5" y1="406" x2="648.5" y2="409" stroke="#9fb3c8" stroke-width="1"/>
<text x="641.9" y="428.3" font-size="11" fill="#ffffff" stroke="#ffffff" stroke-width="0.25" textLength="20.0" lengthAdjust="spacingAndGlyphs">5/Вт</text>
<line x1="687.5" y1="406" x2="687.5" y2="409" stroke="#9fb3c8" stroke-width="1"/>
<text x="680.9" y="428.3" font-size="11" fill="#ffffff" stroke="#ffffff" stroke-width="0.25" textLength="21.8" lengthAdjust="spacingAndGlyphs">6/Ср</text>
<line x1="727.5" y1="406" x2="727.5" y2="409" stroke="#9fb3c8" stroke-width="1"/>
<text x="720.9" y="428.3" font-size="11" fill="#ffffff" stroke="#ffffff" stroke-width="0.25" textLength="20.8" lengthAdjust="spacingAndGlyphs">7/Чт</text>
<line x1="767.5" y1="406" x2="767.5" y2="409" stroke="#9fb3c8" stroke-width="1"/>
<text x="760.9" y="428.3" font-size="11" fill="#ffffff" stroke="#ffffff" stroke-width="0.25" textLength="20.8" lengthAdjust="spacingAndGlyphs">8/Пт</text>
<line x1="806.5" y1="406" x2="806.5" y2="409" stroke="#9fb3c8" stroke-width="1"/>
<text x="794.2" y="428.3" font-size="11" fill="#ffffff" stroke="#ffffff" stroke-width="0.25" textLength="28.9" lengthAdjust="spacingAndGlyphs">11/Пн</text>
<line x1="846.5" y1="406" x2="846.5" y2="409" stroke="#9fb3c8" stroke-width="1"/>
<text x="834.2" y="428.3" font-size="11" fill="#ffffff" stroke="#ffffff" stroke-width="0.25" textLength="25.9" lengthAdjust="spacingAndGlyphs">12/Вт</text>
<line x1="886.5" y1="406" x2="886.5" y2="409" stroke="#9fb3c8" stroke-width="1"/>
<text x="874.2" y="428.3" font-size="11" fill="#ffffff" stroke="#ffffff" stroke-width="0.25" textLength="27.7" lengthAdjust="spacingAndGlyphs">13/Ср</text>
<path d="M18.0,382.5 H77.5 Q79.5,382.5 79.5,384.5 V399.5 Q79.5,401.5 77.5,401.5 H18.0 Z" fill="#5d6f8b" stroke="#a8bace" stroke-width="1"/>
<line x1="18.3" y1="382" x2="18.3" y2="409" stroke="#cfe6e2" stroke-width="1.6"/>
<text x="25.2" y="396" font-size="11" fill="#ffffff" textLength="47.3" lengthAdjust="spacingAndGlyphs">Апр 2020</text>
<path d="M568.5,382.5 H629.8 Q631.8,382.5 631.8,384.5 V399.5 Q631.8,401.5 629.8,401.5 H568.5 Z" fill="#5d6f8b" stroke="#a8bace" stroke-width="1"/>
<line x1="568.8" y1="382" x2="568.8" y2="409" stroke="#cfe6e2" stroke-width="1.6"/>
<text x="576.5" y="396" font-size="11" fill="#ffffff" textLength="48.8" lengthAdjust="spacingAndGlyphs">Май 2020</text>
</svg></body></html>
